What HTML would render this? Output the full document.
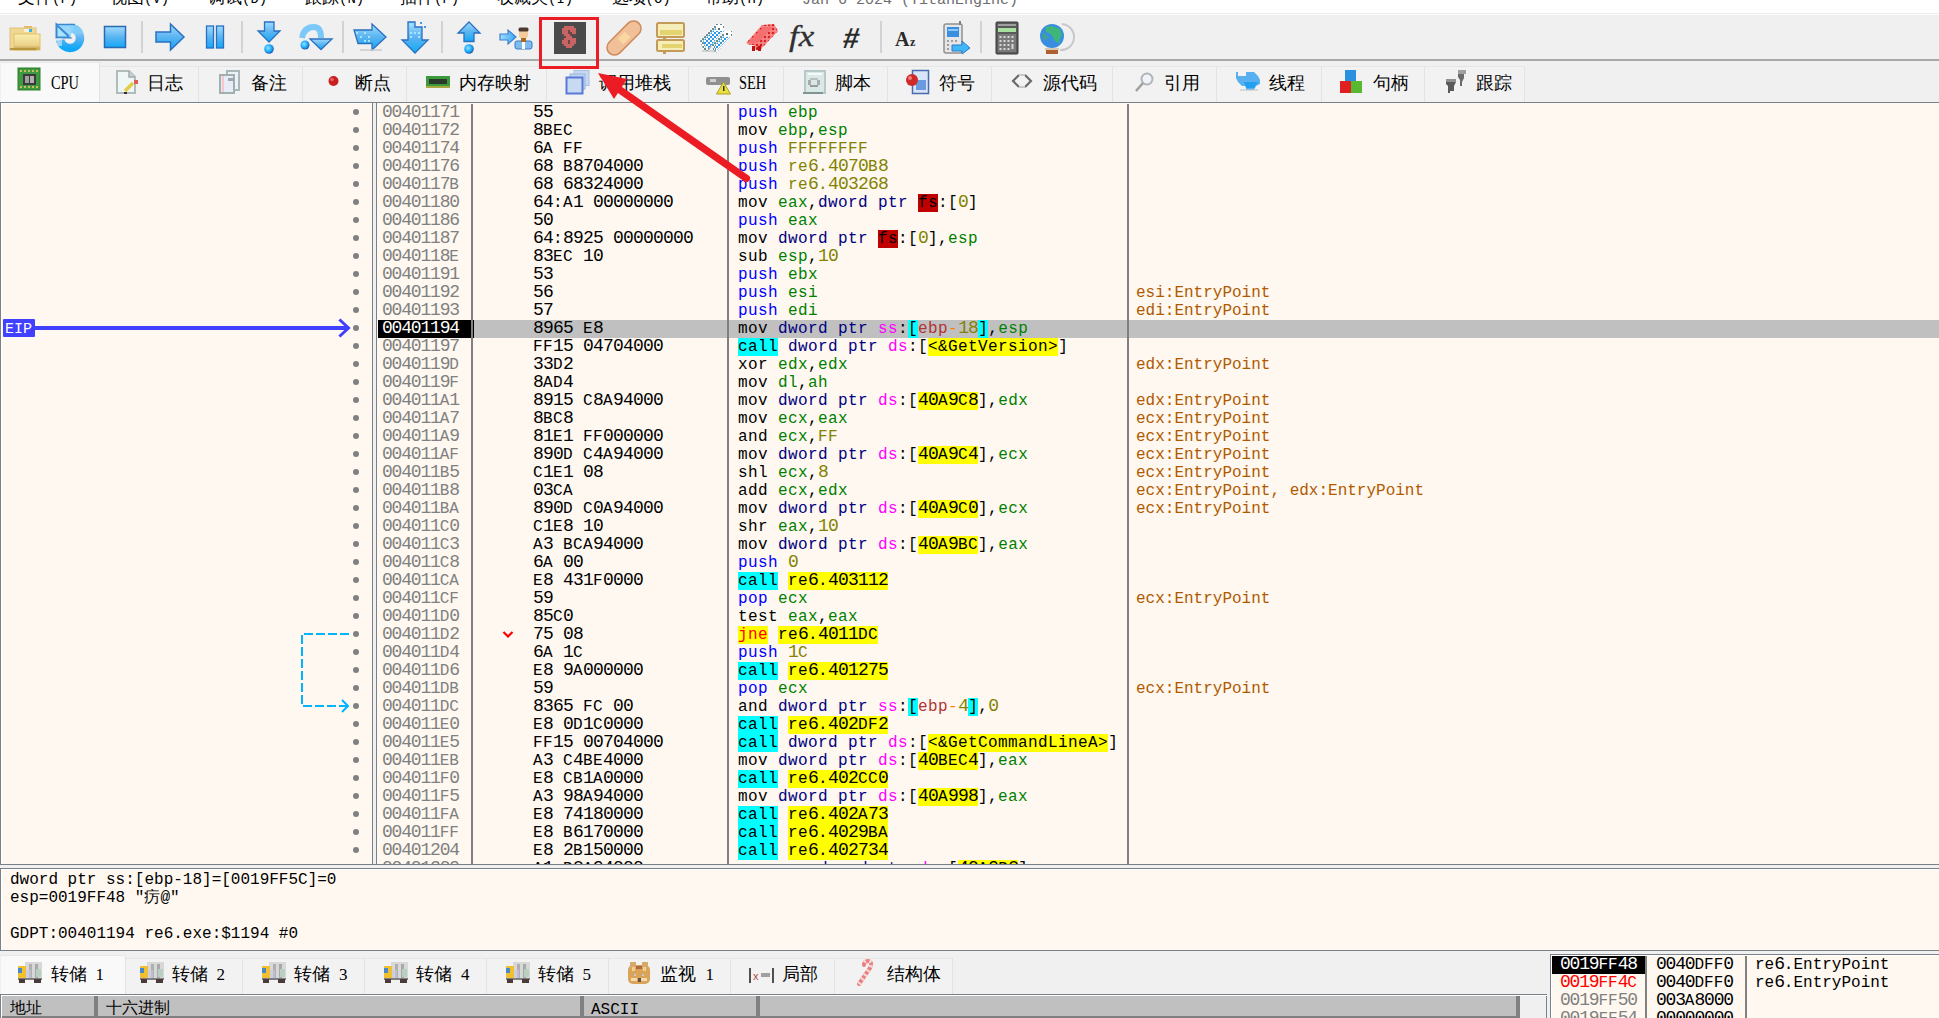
<!DOCTYPE html>
<html><head><meta charset="utf-8"><style>
html,body{margin:0;padding:0;}
body{width:1939px;height:1018px;position:relative;overflow:hidden;background:#f0f0f0;font-family:"Liberation Sans",sans-serif;}
</style></head><body>
<div style="position:absolute;left:0px;top:0px;width:1939px;height:13px;background:#fff"></div><div style="position:absolute;left:0px;top:13px;width:1939px;height:1px;background:#ececec"></div><div style="position:absolute;left:0px;top:14px;width:1939px;height:1px;background:#fff"></div><div style="position:absolute;left:18px;top:-12px;line-height:20px;white-space:pre;font-family:'Liberation Sans',sans-serif;font-size:17px;color:#000;">文件<span style="font-family:'Liberation Mono',monospace;font-size:14px">(F)</span></div><div style="position:absolute;left:110px;top:-12px;line-height:20px;white-space:pre;font-family:'Liberation Sans',sans-serif;font-size:17px;color:#000;">视图<span style="font-family:'Liberation Mono',monospace;font-size:14px">(V)</span></div><div style="position:absolute;left:208px;top:-12px;line-height:20px;white-space:pre;font-family:'Liberation Sans',sans-serif;font-size:17px;color:#000;">调试<span style="font-family:'Liberation Mono',monospace;font-size:14px">(D)</span></div><div style="position:absolute;left:305px;top:-12px;line-height:20px;white-space:pre;font-family:'Liberation Sans',sans-serif;font-size:17px;color:#000;">跟踪<span style="font-family:'Liberation Mono',monospace;font-size:14px">(N)</span></div><div style="position:absolute;left:400px;top:-12px;line-height:20px;white-space:pre;font-family:'Liberation Sans',sans-serif;font-size:17px;color:#000;">插件<span style="font-family:'Liberation Mono',monospace;font-size:14px">(P)</span></div><div style="position:absolute;left:497px;top:-12px;line-height:20px;white-space:pre;font-family:'Liberation Sans',sans-serif;font-size:17px;color:#000;">收藏夹<span style="font-family:'Liberation Mono',monospace;font-size:14px">(I)</span></div><div style="position:absolute;left:611.5px;top:-12px;line-height:20px;white-space:pre;font-family:'Liberation Sans',sans-serif;font-size:17px;color:#000;">选项<span style="font-family:'Liberation Mono',monospace;font-size:14px">(O)</span></div><div style="position:absolute;left:705px;top:-12px;line-height:20px;white-space:pre;font-family:'Liberation Sans',sans-serif;font-size:17px;color:#000;">帮助<span style="font-family:'Liberation Mono',monospace;font-size:14px">(H)</span></div><div style="position:absolute;left:802px;top:-9.5px;line-height:20px;white-space:pre;font-family:'Liberation Mono',monospace;font-size:16px;font-size:15px;color:#6d6d6d;">Jan 6 2024 (TitanEngine)</div><div style="position:absolute;left:0px;top:15px;width:1939px;height:44px;background:#f0f0f0"></div><div style="position:absolute;left:0px;top:59px;width:1939px;height:2px;background:#a9a9a9"></div><div style="position:absolute;left:141px;top:21px;width:2px;height:32px;background:#d2d2d2"></div><div style="position:absolute;left:241px;top:21px;width:2px;height:32px;background:#d2d2d2"></div><div style="position:absolute;left:342px;top:21px;width:2px;height:32px;background:#d2d2d2"></div><div style="position:absolute;left:441px;top:21px;width:2px;height:32px;background:#d2d2d2"></div><div style="position:absolute;left:880px;top:21px;width:2px;height:32px;background:#d2d2d2"></div><div style="position:absolute;left:980px;top:21px;width:2px;height:32px;background:#d2d2d2"></div><svg style="position:absolute;left:0;top:0" width="1939" height="62"><defs>
<linearGradient id="bl" x1="0" y1="0" x2="0" y2="1"><stop offset="0" stop-color="#9fdcff"/><stop offset="0.5" stop-color="#5cb4f0"/><stop offset="1" stop-color="#12a8f8"/></linearGradient>
<linearGradient id="blh" x1="0" y1="0" x2="1" y2="0"><stop offset="0" stop-color="#9fdcff"/><stop offset="1" stop-color="#3aa6f0"/></linearGradient>
<linearGradient id="fold" x1="0" y1="0" x2="0" y2="1"><stop offset="0" stop-color="#fbeeb0"/><stop offset="0.7" stop-color="#ecd38a"/><stop offset="1" stop-color="#b8963e"/></linearGradient>
<radialGradient id="dot" cx="0.4" cy="0.4" r="0.6"><stop offset="0" stop-color="#9fe0ff"/><stop offset="0.6" stop-color="#18b0ff"/><stop offset="1" stop-color="#2060b0"/></radialGradient>
</defs>
<!-- folder -->
<rect x="24" y="26" width="8" height="3" fill="#e8b860"/>
<rect x="10" y="28" width="26" height="22" fill="#f0d890" stroke="#dcc080" stroke-width="1"/>
<rect x="24" y="29" width="8" height="3" fill="#f8f0e0"/><rect x="29" y="29" width="3" height="3" fill="#40b0e0"/>
<rect x="14" y="34" width="26" height="16" fill="url(#fold)" stroke="#e0c070" stroke-width="1"/>
<rect x="10" y="48" width="26" height="2" fill="#b8963e"/>
<!-- restart -->
<path d="M60.2 40 A10 10 0 1 0 70 28" fill="none" stroke="url(#bl)" stroke-width="8.5"/>
<path d="M70 28 A10 10 0 0 1 79 33" fill="none" stroke="#80ccf8" stroke-width="8.5"/>
<polygon points="56.5,24.5 56.5,37.5 70,37.5" fill="#a8e4ff" stroke="#3a88d0" stroke-width="2"/>
<polygon points="56,24 75,24 70,37.5" fill="#8cd4fc" opacity="0.9"/>
<line x1="56" y1="24.5" x2="75" y2="24.5" stroke="#3a88d0" stroke-width="1.5"/>
<line x1="58" y1="26" x2="69" y2="36" stroke="#3a88d0" stroke-width="1.5"/>
<rect x="57" y="38" width="5" height="8" fill="#c8e4f8" opacity="0.7"/>
<!-- stop -->
<rect x="104.5" y="26.5" width="21" height="21" fill="url(#bl)" stroke="#2a6ab0" stroke-width="1.5"/>
<!-- run -->
<polygon points="156,32 170.5,32 170.5,24 184,37 170.5,50 170.5,42 156,42" fill="url(#bl)" stroke="#2a70c0" stroke-width="1.5" stroke-linejoin="miter"/>
<!-- pause -->
<rect x="206.5" y="26" width="7" height="22" fill="url(#bl)" stroke="#2a70c0" stroke-width="1.3"/>
<rect x="216.5" y="26" width="7" height="22" fill="url(#bl)" stroke="#2a70c0" stroke-width="1.3"/>
<!-- step into -->
<polygon points="264.5,22 274,22 274,31 280,31 269,42 258,31 264.5,31" fill="url(#bl)" stroke="#2a70c0" stroke-width="1.3"/>
<circle cx="269" cy="49" r="4.8" fill="url(#dot)"/>
<!-- step over -->
<path d="M302 38 Q304 27 314 27 Q321 27 321 38" fill="none" stroke="#7cc8f8" stroke-width="6"/>
<polygon points="310,39 332,39 321,49.5" fill="url(#bl)" stroke="#2a70c0" stroke-width="1.3"/>
<circle cx="305" cy="45" r="4.5" fill="url(#dot)"/>
<!-- trace into (dotted) -->
<polygon points="354,30 372,30 372,24 386,37 372,50 372,43.5 358,43.5" fill="url(#bl)" stroke="#2a70c0" stroke-width="1.3"/>
<g fill="#a8e4ff"><rect x="356" y="32" width="2" height="2"/><rect x="364" y="32" width="2" height="2"/><rect x="360" y="36" width="2" height="2"/><rect x="368" y="36" width="2" height="2"/><rect x="364" y="40" width="2" height="2"/><rect x="368" y="40" width="2" height="2"/></g>
<rect x="360" y="49" width="22" height="2" fill="#c8c8c8" opacity="0.7"/>
<!-- trace over (dotted) -->
<polygon points="408,22 415,22 415,27 422,27 422,40 428,40 415,53 402,40 408,40" fill="url(#bl)" stroke="#2a70c0" stroke-width="1.3"/>
<g fill="#a8e4ff"><rect x="410" y="24" width="2" height="2"/><rect x="410" y="32" width="2" height="2"/><rect x="414" y="32" width="2" height="2"/><rect x="418" y="32" width="2" height="2"/><rect x="410" y="36" width="2" height="2"/><rect x="418" y="36" width="2" height="2"/></g>
<rect x="420" y="22" width="2" height="2" fill="#3a9af0"/><rect x="424" y="26" width="2" height="2" fill="#3a9af0"/>
<!-- exec till return -->
<polygon points="469,22 480,33 474,33 474,41.5 464,41.5 464,33 458,33" fill="url(#bl)" stroke="#2a70c0" stroke-width="1.3"/>
<circle cx="469" cy="49" r="4.8" fill="url(#dot)"/>
<!-- run to user code -->
<polygon points="500,34 508,34 508,30 516,37 508,44 508,40 500,40" fill="url(#blh)" stroke="#3a80d0" stroke-width="1.2"/>
<rect x="515" y="41" width="17" height="8" rx="2" fill="#7cbcf0" stroke="#3a78c8" stroke-width="1"/>
<rect x="522" y="42" width="3" height="7" fill="#fff"/>
<rect x="519" y="28" width="9" height="10" rx="2" fill="#f4cc9c"/>
<rect x="518.5" y="27.5" width="10" height="4" rx="1.5" fill="#503a30"/>
<rect x="521" y="38" width="5" height="4" fill="#a86a20"/>
<!-- S icon -->
<rect x="554" y="22" width="32" height="32" fill="#4a4a4a"/>
<rect x="564" y="26" width="10" height="2" fill="#c86464"/><rect x="562" y="28" width="14" height="2" fill="#c86464"/><rect x="562" y="30" width="14" height="2" fill="#c86464"/><rect x="562" y="32" width="14" height="2" fill="#c86464"/><rect x="564" y="34" width="6" height="2" fill="#c86464"/><rect x="566" y="36" width="6" height="2" fill="#c86464"/><rect x="564" y="38" width="12" height="2" fill="#c86464"/><rect x="562" y="40" width="14" height="2" fill="#c86464"/><rect x="562" y="42" width="14" height="2" fill="#c86464"/><rect x="564" y="44" width="10" height="2" fill="#c86464"/><rect x="566" y="46" width="6" height="2" fill="#c86464"/><rect x="568" y="30" width="2" height="2" fill="#6a4848"/><rect x="568" y="32" width="2" height="2" fill="#6a4848"/><rect x="570" y="32" width="2" height="2" fill="#6a4848"/><rect x="570" y="34" width="2" height="2" fill="#6a4848"/><rect x="562" y="34" width="2" height="2" fill="#6a4848"/><rect x="564" y="36" width="2" height="2" fill="#6a4848"/><rect x="568" y="40" width="2" height="2" fill="#6a4848"/><rect x="568" y="42" width="2" height="2" fill="#6a4848"/><rect x="562" y="44" width="2" height="2" fill="#6a4848"/><rect x="574" y="34" width="2" height="2" fill="#6a4848"/><rect x="562" y="38" width="2" height="2" fill="#6a4848"/>
<!-- patch -->
<g transform="translate(624 38) rotate(-45)">
<rect x="-21" y="-7.5" width="42" height="15" rx="7.5" fill="#f2c098" stroke="#d08a5a" stroke-width="1.5"/>
<rect x="-5" y="-4" width="10" height="8" fill="#f8d8a0"/>
</g>
<!-- comments -->
<rect x="657" y="23" width="27" height="14" rx="1.5" fill="#f6eeb8" stroke="#c49a58" stroke-width="2"/>
<rect x="660" y="30" width="22" height="5" fill="#e4d470"/>
<rect x="657" y="40" width="27" height="11" rx="1.5" fill="#f6eeb8" stroke="#c49a58" stroke-width="2"/>
<rect x="662" y="44" width="20" height="4" fill="#e4d470"/>
<rect x="663" y="37" width="3" height="3" fill="#c49a58"/><rect x="663" y="51" width="3" height="3" fill="#c49a58"/>
<!-- labels -->
<defs><pattern id="chk" width="4" height="4" patternUnits="userSpaceOnUse"><rect width="4" height="4" fill="#2a9ae8"/><rect width="2" height="2" fill="#ffffff"/><rect x="2" y="2" width="2" height="2" fill="#ffffff"/></pattern>
<pattern id="chk2" width="4" height="4" patternUnits="userSpaceOnUse"><rect width="4" height="4" fill="#ffffff"/><rect width="2" height="2" fill="#5a8080"/><rect x="2" y="2" width="2" height="2" fill="#5a8080"/></pattern>
<pattern id="rchk" width="4" height="4" patternUnits="userSpaceOnUse"><rect width="4" height="4" fill="#f47a7a"/><rect width="2" height="2" fill="#e02020"/><rect x="2" y="2" width="2" height="2" fill="#f88888"/></pattern></defs>
<polygon points="700,41 716,24 724,24 724,29 708,51 704,51" fill="url(#chk2)" opacity="0.9"/>
<polygon points="703,41 717,27 723,27 723,31 709,48 706,48" fill="url(#chk)"/>
<polygon points="712,45 724,31 732,31 732,36 716,53 714,53" fill="url(#chk2)" opacity="0.9"/>
<polygon points="715,45 726,34 730,34 730,37 717,50 715,50" fill="url(#chk)"/>
<rect x="716" y="25" width="7" height="6" fill="#fff"/><rect x="718" y="28" width="2" height="2" fill="#507070"/>
<rect x="724" y="31" width="7" height="6" fill="#fff"/><rect x="726" y="33" width="2" height="2" fill="#507070"/>
<rect x="702" y="50" width="14" height="2" fill="#c0c0c0" opacity="0.6"/>
<!-- bookmarks -->
<polygon points="746,43 762,25 774,24 778,31 760,50 756,50 754,45 750,45" fill="url(#rchk)"/>
<polygon points="748,42 763,27 772,27 761,40 753,44" fill="#f47070"/>
<polygon points="756,48 760,50 762,44" fill="#c01010"/>
<rect x="752" y="46" width="3" height="5" fill="#c01010"/><rect x="758" y="46" width="3" height="5" fill="#c01010"/>
<!-- fx -->
<text x="0" y="0" transform="translate(789 46) scale(1.2 1)" font-family="Liberation Serif" font-style="italic" font-size="29" fill="#303030" stroke="#303030" stroke-width="0.3">fx</text>
<!-- # -->
<text x="0" y="0" transform="translate(842 48) skewX(-8)" font-family="Liberation Sans" font-weight="bold" font-size="29" fill="#2a2a2a">#</text>
<!-- A2 -->
<text x="895" y="46" font-family="Liberation Serif" font-weight="bold" font-size="20" fill="#2a2a2a">A</text>
<text x="910" y="46" font-family="Liberation Serif" font-weight="bold" font-size="12" fill="#2a2a2a">z</text>
<!-- phone -->
<rect x="944" y="24" width="18" height="29" rx="2" fill="#e6e6e6" stroke="#909090" stroke-width="1.5"/>
<rect x="959" y="21" width="2" height="4" fill="#808080"/>
<rect x="947" y="27" width="12" height="10" fill="#3a8ee0"/>
<rect x="948" y="29" width="10" height="2" fill="#8cc8f8"/>
<g fill="#a0a0a0"><rect x="947" y="40" width="2" height="2"/><rect x="951" y="40" width="2" height="2"/><rect x="955" y="40" width="2" height="2"/><rect x="947" y="44" width="2" height="2"/><rect x="947" y="48" width="2" height="2"/></g>
<polygon points="952,45 962,45 962,41 970,48 962,54 962,51 952,51" fill="#40b8f8" stroke="#2a78c8" stroke-width="1"/>
<!-- calculator -->
<rect x="996" y="22" width="22" height="32" rx="1" fill="#5a5a5a" stroke="#3a3a3a" stroke-width="1"/>
<rect x="998" y="24" width="18" height="2" fill="#a0a0a0"/>
<rect x="998" y="28" width="18" height="4" fill="#a8e0a0"/>
<rect x="998" y="34" width="18" height="18" fill="#7a7a7a"/>
<g fill="#d8d8d8"><rect x="999.5" y="36" width="2" height="2"/><rect x="1003.5" y="36" width="2" height="2"/><rect x="1007.5" y="36" width="2" height="2"/><rect x="1011.5" y="36" width="2" height="2"/>
<rect x="999.5" y="40" width="2" height="2"/><rect x="1003.5" y="40" width="2" height="2"/><rect x="1007.5" y="40" width="2" height="2"/><rect x="1011.5" y="40" width="2" height="2"/>
<rect x="999.5" y="44" width="2" height="2"/><rect x="1003.5" y="44" width="2" height="2"/><rect x="1007.5" y="44" width="2" height="2"/><rect x="1011.5" y="44" width="2" height="5"/>
<rect x="999.5" y="48" width="2" height="2"/><rect x="1003.5" y="48" width="2" height="2"/><rect x="1007.5" y="48" width="2" height="2"/></g>
<!-- globe -->
<path d="M1062 24 A13 13 0 0 1 1060 50" fill="none" stroke="#c8c8c8" stroke-width="2"/>
<circle cx="1052" cy="36" r="12" fill="#3a8ee0"/>
<path d="M1046 27 Q1052 25 1060 29 L1062 35 Q1058 40 1060 44 L1054 40 Q1052 33 1046 32 Z" fill="#40c060" opacity="0.8"/>
<path d="M1042 34 Q1046 33 1048 38 L1044 40 Z" fill="#40b060" opacity="0.7"/>
<rect x="1046" y="50" width="12" height="4" fill="#b06030"/>
<rect x="1045" y="48" width="14" height="2" fill="#d8c8b0"/>
</svg><div style="position:absolute;left:0px;top:61px;width:1939px;height:41px;background:#f0f0f0"></div><div style="position:absolute;left:1px;top:62px;width:99px;height:40px;background:#f9f9f9;border-right:1px solid #e3e3e3;border-top:1px solid #e8e8e8;box-sizing:border-box"></div><div style="position:absolute;left:100px;top:66px;width:99px;height:36px;background:#f2f2f2;border-top:1px solid #e6e6e6;border-right:1px solid #e3e3e3;box-sizing:border-box"></div><div style="position:absolute;left:199px;top:66px;width:104px;height:36px;background:#f2f2f2;border-top:1px solid #e6e6e6;border-right:1px solid #e3e3e3;box-sizing:border-box"></div><div style="position:absolute;left:303px;top:66px;width:104px;height:36px;background:#f2f2f2;border-top:1px solid #e6e6e6;border-right:1px solid #e3e3e3;box-sizing:border-box"></div><div style="position:absolute;left:407px;top:66px;width:140px;height:36px;background:#f2f2f2;border-top:1px solid #e6e6e6;border-right:1px solid #e3e3e3;box-sizing:border-box"></div><div style="position:absolute;left:547px;top:66px;width:142px;height:36px;background:#f2f2f2;border-top:1px solid #e6e6e6;border-right:1px solid #e3e3e3;box-sizing:border-box"></div><div style="position:absolute;left:689px;top:66px;width:95px;height:36px;background:#f2f2f2;border-top:1px solid #e6e6e6;border-right:1px solid #e3e3e3;box-sizing:border-box"></div><div style="position:absolute;left:784px;top:66px;width:104px;height:36px;background:#f2f2f2;border-top:1px solid #e6e6e6;border-right:1px solid #e3e3e3;box-sizing:border-box"></div><div style="position:absolute;left:888px;top:66px;width:104px;height:36px;background:#f2f2f2;border-top:1px solid #e6e6e6;border-right:1px solid #e3e3e3;box-sizing:border-box"></div><div style="position:absolute;left:992px;top:66px;width:121px;height:36px;background:#f2f2f2;border-top:1px solid #e6e6e6;border-right:1px solid #e3e3e3;box-sizing:border-box"></div><div style="position:absolute;left:1113px;top:66px;width:104px;height:36px;background:#f2f2f2;border-top:1px solid #e6e6e6;border-right:1px solid #e3e3e3;box-sizing:border-box"></div><div style="position:absolute;left:1217px;top:66px;width:105px;height:36px;background:#f2f2f2;border-top:1px solid #e6e6e6;border-right:1px solid #e3e3e3;box-sizing:border-box"></div><div style="position:absolute;left:1322px;top:66px;width:103px;height:36px;background:#f2f2f2;border-top:1px solid #e6e6e6;border-right:1px solid #e3e3e3;box-sizing:border-box"></div><div style="position:absolute;left:1425px;top:66px;width:100px;height:36px;background:#f2f2f2;border-top:1px solid #e6e6e6;border-right:1px solid #e3e3e3;box-sizing:border-box"></div><div style="position:absolute;left:50.5px;top:70.5px;line-height:24px;white-space:pre;font-family:'Liberation Serif',serif;font-size:18px;color:#000;transform:scaleX(0.8);transform-origin:0 0;">CPU</div><div style="position:absolute;left:146.5px;top:70.5px;line-height:24px;white-space:pre;font-family:'Liberation Sans',sans-serif;font-size:18px;color:#000;">日志</div><div style="position:absolute;left:251px;top:70.5px;line-height:24px;white-space:pre;font-family:'Liberation Sans',sans-serif;font-size:18px;color:#000;">备注</div><div style="position:absolute;left:355px;top:70.5px;line-height:24px;white-space:pre;font-family:'Liberation Sans',sans-serif;font-size:18px;color:#000;">断点</div><div style="position:absolute;left:458.5px;top:70.5px;line-height:24px;white-space:pre;font-family:'Liberation Sans',sans-serif;font-size:18px;color:#000;">内存映射</div><div style="position:absolute;left:599px;top:70.5px;line-height:24px;white-space:pre;font-family:'Liberation Sans',sans-serif;font-size:18px;color:#000;">调用堆栈</div><div style="position:absolute;left:738.5px;top:70.5px;line-height:24px;white-space:pre;font-family:'Liberation Serif',serif;font-size:18px;color:#000;transform:scaleX(0.8);transform-origin:0 0;">SEH</div><div style="position:absolute;left:834.5px;top:70.5px;line-height:24px;white-space:pre;font-family:'Liberation Sans',sans-serif;font-size:18px;color:#000;">脚本</div><div style="position:absolute;left:938.5px;top:70.5px;line-height:24px;white-space:pre;font-family:'Liberation Sans',sans-serif;font-size:18px;color:#000;">符号</div><div style="position:absolute;left:1042.5px;top:70.5px;line-height:24px;white-space:pre;font-family:'Liberation Sans',sans-serif;font-size:18px;color:#000;">源代码</div><div style="position:absolute;left:1164px;top:70.5px;line-height:24px;white-space:pre;font-family:'Liberation Sans',sans-serif;font-size:18px;color:#000;">引用</div><div style="position:absolute;left:1269px;top:70.5px;line-height:24px;white-space:pre;font-family:'Liberation Sans',sans-serif;font-size:18px;color:#000;">线程</div><div style="position:absolute;left:1373px;top:70.5px;line-height:24px;white-space:pre;font-family:'Liberation Sans',sans-serif;font-size:18px;color:#000;">句柄</div><div style="position:absolute;left:1476px;top:70.5px;line-height:24px;white-space:pre;font-family:'Liberation Sans',sans-serif;font-size:18px;color:#000;">跟踪</div><svg style="position:absolute;left:0;top:60" width="1939" height="42"><g transform="translate(0,-60)">
<!-- CPU -->
<rect x="18" y="68" width="22" height="22" fill="#3f9a3f" stroke="#2c7c2c" stroke-width="1"/>
<g fill="#c8c060"><rect x="20" y="70" width="2" height="2"/><rect x="24" y="70" width="2" height="2"/><rect x="28" y="70" width="2" height="2"/><rect x="32" y="70" width="2" height="2"/><rect x="36" y="70" width="2" height="2"/>
<rect x="20" y="86" width="2" height="2"/><rect x="24" y="86" width="2" height="2"/><rect x="28" y="86" width="2" height="2"/><rect x="32" y="86" width="2" height="2"/><rect x="36" y="86" width="2" height="2"/></g>
<rect x="23" y="74" width="13" height="11" fill="#3a3a3a"/>
<rect x="25" y="76" width="4" height="7" fill="#a0a0a0"/><rect x="30" y="76" width="4" height="7" fill="#b0b0b0"/>
<!-- log -->
<path d="M117 71 H129 L135 77 V93 H117 Z" fill="#eef6f6" stroke="#b0bcbc" stroke-width="2"/>
<path d="M129 71 V77 H135" fill="#c8d4d4" stroke="#a0acac" stroke-width="1.5"/>
<line x1="125" y1="91" x2="133" y2="83" stroke="#e4cc48" stroke-width="3.5"/>
<rect x="134" y="80" width="4" height="4" fill="#e05a5a"/>
<rect x="124" y="92" width="3" height="2" fill="#303030"/>
<!-- notes -->
<rect x="227" y="71" width="12" height="19" fill="#eef2f8" stroke="#a8b8b8" stroke-width="2"/>
<rect x="220" y="75" width="14" height="18" fill="#e8ecf8" stroke="#a0b0b0" stroke-width="2"/>
<rect x="222" y="76" width="2" height="16" fill="#f8c8c8"/>
<rect x="228" y="78" width="6" height="3" fill="#9aa8a8"/>
<!-- breakpoint -->
<circle cx="333.5" cy="81" r="5" fill="#c81e1e"/><circle cx="332" cy="79.5" r="1.8" fill="#e86060"/>
<!-- memory map -->
<rect x="426" y="76" width="24" height="12" fill="#3c9a3c"/>
<rect x="429" y="79" width="18" height="5" fill="#2a3a2a"/>
<rect x="426" y="86" width="24" height="2" fill="#a8a840"/>
<!-- call stack -->
<rect x="574" y="70.5" width="15" height="15" fill="#c8d8f0" stroke="#a8c0e0" stroke-width="1"/>
<rect x="570" y="74" width="15" height="15" fill="#c0d4f0" stroke="#98b4e0" stroke-width="1"/>
<rect x="566.5" y="77.5" width="16" height="16" fill="#c8daf2" stroke="#5a78d8" stroke-width="2"/>
<!-- SEH -->
<rect x="706" y="77" width="24" height="8" rx="2" fill="#909090"/>
<rect x="710" y="79" width="6" height="3" fill="#d0d0d0"/>
<polygon points="723.5,82 730.5,94 716.5,94" fill="#e8e040" stroke="#b0a020" stroke-width="1"/>
<rect x="723" y="86" width="1.5" height="5" fill="#303030"/>
<!-- script -->
<rect x="805" y="71" width="20" height="22" fill="#dbe8e8" stroke="#b8c8c8" stroke-width="2"/>
<rect x="808" y="73" width="14" height="2" fill="#f4fafa"/>
<rect x="803" y="92" width="20" height="2" fill="#809494"/>
<rect x="808" y="80" width="3" height="5" fill="#a8acac"/><rect x="817" y="80" width="3" height="5" fill="#a8acac"/>
<rect x="810" y="78" width="8" height="2" fill="#b8c0c0"/><rect x="810" y="85" width="8" height="2" fill="#989c9c"/>
<!-- symbols -->
<rect x="912.5" y="70.5" width="16" height="23" fill="#d8e4f8" stroke="#4a6ab0" stroke-width="1.5"/>
<rect x="916" y="80" width="10" height="10" fill="#6a9ae0"/>
<circle cx="912" cy="80" r="6" fill="#d02828"/><circle cx="910" cy="78" r="2" fill="#f08080"/>
<!-- source -->
<polyline points="1019,75 1013,81 1019,87" fill="none" stroke="#6a6a6a" stroke-width="2.2"/>
<polyline points="1025,75 1031,81 1025,87" fill="none" stroke="#6a6a6a" stroke-width="2.2"/>
<line x1="1019" y1="75" x2="1025" y2="75" stroke="#c8c8c8" stroke-width="2"/>
<line x1="1019" y1="87" x2="1025" y2="87" stroke="#c8c8c8" stroke-width="2"/>
<!-- references -->
<circle cx="1147" cy="79" r="5.5" fill="#f0f4f8" stroke="#b0b4b8" stroke-width="2"/>
<line x1="1143" y1="83" x2="1136" y2="91" stroke="#a0a0a0" stroke-width="2.5"/>
<!-- threads (bird) -->
<path d="M1236 72 L1238 72 L1238 76 L1246 76 L1246 72 L1254 72 L1256 74 L1258 76 L1260 80 L1260 84 L1256 86 L1254 90 L1246 90 L1246 86 L1242 86 L1238 82 L1236 78 Z" fill="#58b0f0"/>
<path d="M1244 82 L1258 82 L1254 88 L1246 88 Z" fill="#20a0f0"/>
<rect x="1240" y="89" width="18" height="2" fill="#c8c8c8" opacity="0.6"/>
<!-- handles -->
<rect x="1345" y="70" width="11" height="12" fill="#2a90e0"/>
<rect x="1340" y="81" width="11" height="12" fill="#e02020"/>
<rect x="1351" y="81" width="11" height="12" fill="#58b830"/>
<!-- trace -->
<path d="M1448 79 H1456 V82 L1454 86 V91 H1450 V93 H1448 V86 L1446 84 V81 Z" fill="#5a5a5a"/>
<path d="M1458 70 H1464 V78 L1462 82 V86 H1460 V80 L1458 77 Z" fill="#6a6a6a"/>
<rect x="1446" y="79" width="10" height="3" fill="#909090"/>
<rect x="1458" y="70" width="8" height="4" fill="#a0a0a0"/>
</g>
<rect x="23" y="74" width="13" height="11" fill="#3a3a3a"/>
<rect x="25" y="76" width="4" height="7" fill="#a0a0a0"/><rect x="30" y="76" width="4" height="7" fill="#b0b0b0"/>
<!-- log -->
<path d="M117 71 H129 L135 77 V93 H117 Z" fill="#eef6f6" stroke="#b0bcbc" stroke-width="2"/>
<path d="M129 71 V77 H135" fill="#c8d4d4" stroke="#a0acac" stroke-width="1.5"/>
<line x1="125" y1="91" x2="133" y2="83" stroke="#e4cc48" stroke-width="3.5"/>
<rect x="134" y="80" width="4" height="4" fill="#e05a5a"/>
<rect x="124" y="92" width="3" height="2" fill="#303030"/>
<!-- notes -->
<rect x="227" y="71" width="12" height="19" fill="#eef2f8" stroke="#a8b8b8" stroke-width="2"/>
<rect x="220" y="75" width="14" height="18" fill="#e8ecf8" stroke="#a0b0b0" stroke-width="2"/>
<rect x="222" y="76" width="2" height="16" fill="#f8c8c8"/>
<rect x="228" y="78" width="6" height="3" fill="#9aa8a8"/>
<!-- breakpoint -->
<circle cx="333.5" cy="81" r="5" fill="#c81e1e"/><circle cx="332" cy="79.5" r="1.8" fill="#e86060"/>
<!-- memory map -->
<rect x="426" y="76" width="24" height="12" fill="#3c9a3c"/>
<rect x="429" y="79" width="18" height="5" fill="#2a3a2a"/>
<rect x="426" y="86" width="24" height="2" fill="#a8a840"/>
<!-- call stack -->
<rect x="574" y="70.5" width="15" height="15" fill="#c8d8f0" stroke="#a8c0e0" stroke-width="1"/>
<rect x="570" y="74" width="15" height="15" fill="#c0d4f0" stroke="#98b4e0" stroke-width="1"/>
<rect x="566.5" y="77.5" width="16" height="16" fill="#c8daf2" stroke="#5a78d8" stroke-width="2"/>
<!-- SEH -->
<rect x="706" y="77" width="24" height="8" rx="2" fill="#909090"/>
<rect x="710" y="79" width="6" height="3" fill="#d0d0d0"/>
<polygon points="723.5,82 730.5,94 716.5,94" fill="#e8e040" stroke="#b0a020" stroke-width="1"/>
<rect x="723" y="86" width="1.5" height="5" fill="#303030"/>
<!-- script -->
<rect x="803.5" y="70.5" width="21" height="23" fill="#dfe6e2" stroke="#a8b4ae" stroke-width="1.2"/>
<rect x="808" y="80" width="12" height="5" fill="#a8b0ac"/>
<!-- symbols -->
<rect x="912.5" y="70.5" width="16" height="23" fill="#d8e4f8" stroke="#4a6ab0" stroke-width="1.5"/>
<rect x="916" y="80" width="10" height="10" fill="#6a9ae0"/>
<circle cx="912" cy="80" r="6" fill="#d02828"/><circle cx="910" cy="78" r="2" fill="#f08080"/>
<!-- source -->
<polyline points="1018,79 1013,83.5 1018,88" fill="none" stroke="#808080" stroke-width="2.2"/>
<polyline points="1026,79 1031,83.5 1026,88" fill="none" stroke="#808080" stroke-width="2.2"/>
<!-- references -->
<circle cx="1147" cy="79" r="5.5" fill="#f0f4f8" stroke="#b0b4b8" stroke-width="2"/>
<line x1="1143" y1="83" x2="1136" y2="91" stroke="#a0a0a0" stroke-width="2.5"/>
<!-- threads (bird) -->
<path d="M1236 72 L1238 72 L1238 76 L1246 76 L1246 72 L1254 72 L1256 74 L1258 76 L1260 80 L1260 84 L1256 86 L1254 90 L1246 90 L1246 86 L1242 86 L1238 82 L1236 78 Z" fill="#58b0f0"/>
<path d="M1244 82 L1258 82 L1254 88 L1246 88 Z" fill="#20a0f0"/>
<rect x="1240" y="89" width="18" height="2" fill="#c8c8c8" opacity="0.6"/>
<!-- handles -->
<rect x="1345" y="70" width="11" height="12" fill="#2a90e0"/>
<rect x="1340" y="81" width="11" height="12" fill="#e02020"/>
<rect x="1351" y="81" width="11" height="12" fill="#58b830"/>
<!-- trace -->
<path d="M1448 84 q2 -4 5 -2 q1 3 -2 6 l-1 6 h-2 z" fill="#707070"/>
<path d="M1458 72 q3 -2 5 1 l0 8 q-2 2 -4 0 z" fill="#808080"/>
<rect x="1452" y="78" width="4" height="3" fill="#909090"/>
</g>
</svg><div style="position:absolute;left:0px;top:102px;width:1939px;height:1px;background:#7b8189"></div><div style="position:absolute;left:0px;top:103px;width:373px;height:762px;background:#fff8f0"></div><div style="position:absolute;left:0px;top:103px;width:1px;height:762px;background:#7b8189"></div><div style="position:absolute;left:372px;top:103px;width:1px;height:762px;background:#7b8189"></div><div style="position:absolute;left:373px;top:103px;width:3px;height:762px;background:#f0f0f0"></div><div style="position:absolute;left:1px;top:103px;width:371px;height:1px;background:#fff"></div><div style="position:absolute;left:1px;top:103px;width:1px;height:761px;background:#fff"></div><div style="position:absolute;left:377px;top:103px;width:1562px;height:1px;background:#fff"></div><div style="position:absolute;left:377px;top:103px;width:1px;height:761px;background:#fff"></div><div style="position:absolute;left:376px;top:103px;width:1563px;height:762px;background:#fff8f0"></div><div style="position:absolute;left:376px;top:103px;width:1px;height:762px;background:#7b8189"></div><div style="position:absolute;left:0px;top:864px;width:1939px;height:1px;background:#7b8189"></div><div style="position:absolute;left:0px;top:865px;width:1939px;height:3px;background:#f0f0f0"></div><div style="position:absolute;left:474px;top:320px;width:1465px;height:18px;background:#c0c0c0"></div><div style="position:absolute;left:378px;top:320px;width:96px;height:18px;background:#000"></div><div style="position:absolute;left:471px;top:104px;width:2px;height:760px;background:#808080"></div><div style="position:absolute;left:727px;top:104px;width:2px;height:760px;background:#808080"></div><div style="position:absolute;left:1127px;top:104px;width:2px;height:760px;background:#808080"></div><div style="position:absolute;left:0;top:0;width:1939px;height:864px;overflow:hidden"><div style="position:absolute;left:382px;top:104px;line-height:18px;white-space:pre;font-family:'Liberation Mono',monospace;font-size:16px;color:#808080;"><span style="font-size:18px;letter-spacing:-1.182px;line-height:0;position:relative;top:-0.3px">00401171</span></div><div style="position:absolute;left:533px;top:104px;line-height:18px;white-space:pre;font-family:'Liberation Mono',monospace;font-size:16px;letter-spacing:0.4px;color:#000;"><span style="font-size:18px;letter-spacing:-0.802px;line-height:0;position:relative;top:-0.3px">55</span></div><div style="position:absolute;left:738px;top:104px;line-height:18px;white-space:pre;font-family:'Liberation Mono',monospace;font-size:16px;letter-spacing:0.4px;color:#000;"><span style="color:#0000ff">push</span> <span style="color:#008000">ebp</span></div><div style="position:absolute;left:353px;top:109px;width:6px;height:6px;border-radius:50%;background:#808080"></div><div style="position:absolute;left:382px;top:122px;line-height:18px;white-space:pre;font-family:'Liberation Mono',monospace;font-size:16px;color:#808080;"><span style="font-size:18px;letter-spacing:-1.182px;line-height:0;position:relative;top:-0.3px">00401172</span></div><div style="position:absolute;left:533px;top:122px;line-height:18px;white-space:pre;font-family:'Liberation Mono',monospace;font-size:16px;letter-spacing:0.4px;color:#000;"><span style="font-size:18px;letter-spacing:-0.802px;line-height:0;position:relative;top:-0.3px">8</span>BEC</div><div style="position:absolute;left:738px;top:122px;line-height:18px;white-space:pre;font-family:'Liberation Mono',monospace;font-size:16px;letter-spacing:0.4px;color:#000;">mov <span style="color:#008000">ebp</span>,<span style="color:#008000">esp</span></div><div style="position:absolute;left:353px;top:127px;width:6px;height:6px;border-radius:50%;background:#808080"></div><div style="position:absolute;left:382px;top:140px;line-height:18px;white-space:pre;font-family:'Liberation Mono',monospace;font-size:16px;color:#808080;"><span style="font-size:18px;letter-spacing:-1.182px;line-height:0;position:relative;top:-0.3px">00401174</span></div><div style="position:absolute;left:533px;top:140px;line-height:18px;white-space:pre;font-family:'Liberation Mono',monospace;font-size:16px;letter-spacing:0.4px;color:#000;"><span style="font-size:18px;letter-spacing:-0.802px;line-height:0;position:relative;top:-0.3px">6</span>A FF</div><div style="position:absolute;left:738px;top:140px;line-height:18px;white-space:pre;font-family:'Liberation Mono',monospace;font-size:16px;letter-spacing:0.4px;color:#000;"><span style="color:#0000ff">push</span> <span style="color:#828200">FFFFFFFF</span></div><div style="position:absolute;left:353px;top:145px;width:6px;height:6px;border-radius:50%;background:#808080"></div><div style="position:absolute;left:382px;top:158px;line-height:18px;white-space:pre;font-family:'Liberation Mono',monospace;font-size:16px;color:#808080;"><span style="font-size:18px;letter-spacing:-1.182px;line-height:0;position:relative;top:-0.3px">00401176</span></div><div style="position:absolute;left:533px;top:158px;line-height:18px;white-space:pre;font-family:'Liberation Mono',monospace;font-size:16px;letter-spacing:0.4px;color:#000;"><span style="font-size:18px;letter-spacing:-0.802px;line-height:0;position:relative;top:-0.3px">68</span> B<span style="font-size:18px;letter-spacing:-0.802px;line-height:0;position:relative;top:-0.3px">8704000</span></div><div style="position:absolute;left:738px;top:158px;line-height:18px;white-space:pre;font-family:'Liberation Mono',monospace;font-size:16px;letter-spacing:0.4px;color:#000;"><span style="color:#0000ff">push</span> <span style="color:#828200">re<span style="font-size:18px;letter-spacing:-0.802px;line-height:0;position:relative;top:-0.3px">6</span>.<span style="font-size:18px;letter-spacing:-0.802px;line-height:0;position:relative;top:-0.3px">4070</span>B<span style="font-size:18px;letter-spacing:-0.802px;line-height:0;position:relative;top:-0.3px">8</span></span></div><div style="position:absolute;left:353px;top:163px;width:6px;height:6px;border-radius:50%;background:#808080"></div><div style="position:absolute;left:382px;top:176px;line-height:18px;white-space:pre;font-family:'Liberation Mono',monospace;font-size:16px;color:#808080;"><span style="font-size:18px;letter-spacing:-1.182px;line-height:0;position:relative;top:-0.3px">0040117</span>B</div><div style="position:absolute;left:533px;top:176px;line-height:18px;white-space:pre;font-family:'Liberation Mono',monospace;font-size:16px;letter-spacing:0.4px;color:#000;"><span style="font-size:18px;letter-spacing:-0.802px;line-height:0;position:relative;top:-0.3px">68</span> <span style="font-size:18px;letter-spacing:-0.802px;line-height:0;position:relative;top:-0.3px">68324000</span></div><div style="position:absolute;left:738px;top:176px;line-height:18px;white-space:pre;font-family:'Liberation Mono',monospace;font-size:16px;letter-spacing:0.4px;color:#000;"><span style="color:#0000ff">push</span> <span style="color:#828200">re<span style="font-size:18px;letter-spacing:-0.802px;line-height:0;position:relative;top:-0.3px">6</span>.<span style="font-size:18px;letter-spacing:-0.802px;line-height:0;position:relative;top:-0.3px">403268</span></span></div><div style="position:absolute;left:353px;top:181px;width:6px;height:6px;border-radius:50%;background:#808080"></div><div style="position:absolute;left:382px;top:194px;line-height:18px;white-space:pre;font-family:'Liberation Mono',monospace;font-size:16px;color:#808080;"><span style="font-size:18px;letter-spacing:-1.182px;line-height:0;position:relative;top:-0.3px">00401180</span></div><div style="position:absolute;left:533px;top:194px;line-height:18px;white-space:pre;font-family:'Liberation Mono',monospace;font-size:16px;letter-spacing:0.4px;color:#000;"><span style="font-size:18px;letter-spacing:-0.802px;line-height:0;position:relative;top:-0.3px">64</span>:A<span style="font-size:18px;letter-spacing:-0.802px;line-height:0;position:relative;top:-0.3px">1</span> <span style="font-size:18px;letter-spacing:-0.802px;line-height:0;position:relative;top:-0.3px">00000000</span></div><div style="position:absolute;left:738px;top:194px;line-height:18px;white-space:pre;font-family:'Liberation Mono',monospace;font-size:16px;letter-spacing:0.4px;color:#000;">mov <span style="color:#008000">eax</span>,<span style="color:#000080">dword ptr</span> <span style="background:#c00000;color:#000;display:inline-block;height:18px">fs</span>:[<span style="color:#828200"><span style="font-size:18px;letter-spacing:-0.802px;line-height:0;position:relative;top:-0.3px">0</span></span>]</div><div style="position:absolute;left:353px;top:199px;width:6px;height:6px;border-radius:50%;background:#808080"></div><div style="position:absolute;left:382px;top:212px;line-height:18px;white-space:pre;font-family:'Liberation Mono',monospace;font-size:16px;color:#808080;"><span style="font-size:18px;letter-spacing:-1.182px;line-height:0;position:relative;top:-0.3px">00401186</span></div><div style="position:absolute;left:533px;top:212px;line-height:18px;white-space:pre;font-family:'Liberation Mono',monospace;font-size:16px;letter-spacing:0.4px;color:#000;"><span style="font-size:18px;letter-spacing:-0.802px;line-height:0;position:relative;top:-0.3px">50</span></div><div style="position:absolute;left:738px;top:212px;line-height:18px;white-space:pre;font-family:'Liberation Mono',monospace;font-size:16px;letter-spacing:0.4px;color:#000;"><span style="color:#0000ff">push</span> <span style="color:#008000">eax</span></div><div style="position:absolute;left:353px;top:217px;width:6px;height:6px;border-radius:50%;background:#808080"></div><div style="position:absolute;left:382px;top:230px;line-height:18px;white-space:pre;font-family:'Liberation Mono',monospace;font-size:16px;color:#808080;"><span style="font-size:18px;letter-spacing:-1.182px;line-height:0;position:relative;top:-0.3px">00401187</span></div><div style="position:absolute;left:533px;top:230px;line-height:18px;white-space:pre;font-family:'Liberation Mono',monospace;font-size:16px;letter-spacing:0.4px;color:#000;"><span style="font-size:18px;letter-spacing:-0.802px;line-height:0;position:relative;top:-0.3px">64</span>:<span style="font-size:18px;letter-spacing:-0.802px;line-height:0;position:relative;top:-0.3px">8925</span> <span style="font-size:18px;letter-spacing:-0.802px;line-height:0;position:relative;top:-0.3px">00000000</span></div><div style="position:absolute;left:738px;top:230px;line-height:18px;white-space:pre;font-family:'Liberation Mono',monospace;font-size:16px;letter-spacing:0.4px;color:#000;">mov <span style="color:#000080">dword ptr</span> <span style="background:#c00000;color:#000;display:inline-block;height:18px">fs</span>:[<span style="color:#828200"><span style="font-size:18px;letter-spacing:-0.802px;line-height:0;position:relative;top:-0.3px">0</span></span>],<span style="color:#008000">esp</span></div><div style="position:absolute;left:353px;top:235px;width:6px;height:6px;border-radius:50%;background:#808080"></div><div style="position:absolute;left:382px;top:248px;line-height:18px;white-space:pre;font-family:'Liberation Mono',monospace;font-size:16px;color:#808080;"><span style="font-size:18px;letter-spacing:-1.182px;line-height:0;position:relative;top:-0.3px">0040118</span>E</div><div style="position:absolute;left:533px;top:248px;line-height:18px;white-space:pre;font-family:'Liberation Mono',monospace;font-size:16px;letter-spacing:0.4px;color:#000;"><span style="font-size:18px;letter-spacing:-0.802px;line-height:0;position:relative;top:-0.3px">83</span>EC <span style="font-size:18px;letter-spacing:-0.802px;line-height:0;position:relative;top:-0.3px">10</span></div><div style="position:absolute;left:738px;top:248px;line-height:18px;white-space:pre;font-family:'Liberation Mono',monospace;font-size:16px;letter-spacing:0.4px;color:#000;">sub <span style="color:#008000">esp</span>,<span style="color:#828200"><span style="font-size:18px;letter-spacing:-0.802px;line-height:0;position:relative;top:-0.3px">10</span></span></div><div style="position:absolute;left:353px;top:253px;width:6px;height:6px;border-radius:50%;background:#808080"></div><div style="position:absolute;left:382px;top:266px;line-height:18px;white-space:pre;font-family:'Liberation Mono',monospace;font-size:16px;color:#808080;"><span style="font-size:18px;letter-spacing:-1.182px;line-height:0;position:relative;top:-0.3px">00401191</span></div><div style="position:absolute;left:533px;top:266px;line-height:18px;white-space:pre;font-family:'Liberation Mono',monospace;font-size:16px;letter-spacing:0.4px;color:#000;"><span style="font-size:18px;letter-spacing:-0.802px;line-height:0;position:relative;top:-0.3px">53</span></div><div style="position:absolute;left:738px;top:266px;line-height:18px;white-space:pre;font-family:'Liberation Mono',monospace;font-size:16px;letter-spacing:0.4px;color:#000;"><span style="color:#0000ff">push</span> <span style="color:#008000">ebx</span></div><div style="position:absolute;left:353px;top:271px;width:6px;height:6px;border-radius:50%;background:#808080"></div><div style="position:absolute;left:382px;top:284px;line-height:18px;white-space:pre;font-family:'Liberation Mono',monospace;font-size:16px;color:#808080;"><span style="font-size:18px;letter-spacing:-1.182px;line-height:0;position:relative;top:-0.3px">00401192</span></div><div style="position:absolute;left:533px;top:284px;line-height:18px;white-space:pre;font-family:'Liberation Mono',monospace;font-size:16px;letter-spacing:0.4px;color:#000;"><span style="font-size:18px;letter-spacing:-0.802px;line-height:0;position:relative;top:-0.3px">56</span></div><div style="position:absolute;left:738px;top:284px;line-height:18px;white-space:pre;font-family:'Liberation Mono',monospace;font-size:16px;letter-spacing:0.4px;color:#000;"><span style="color:#0000ff">push</span> <span style="color:#008000">esi</span></div><div style="position:absolute;left:1136px;top:284px;line-height:18px;white-space:pre;font-family:'Liberation Mono',monospace;font-size:16px;color:#b05a00;">esi:EntryPoint</div><div style="position:absolute;left:353px;top:289px;width:6px;height:6px;border-radius:50%;background:#808080"></div><div style="position:absolute;left:382px;top:302px;line-height:18px;white-space:pre;font-family:'Liberation Mono',monospace;font-size:16px;color:#808080;"><span style="font-size:18px;letter-spacing:-1.182px;line-height:0;position:relative;top:-0.3px">00401193</span></div><div style="position:absolute;left:533px;top:302px;line-height:18px;white-space:pre;font-family:'Liberation Mono',monospace;font-size:16px;letter-spacing:0.4px;color:#000;"><span style="font-size:18px;letter-spacing:-0.802px;line-height:0;position:relative;top:-0.3px">57</span></div><div style="position:absolute;left:738px;top:302px;line-height:18px;white-space:pre;font-family:'Liberation Mono',monospace;font-size:16px;letter-spacing:0.4px;color:#000;"><span style="color:#0000ff">push</span> <span style="color:#008000">edi</span></div><div style="position:absolute;left:1136px;top:302px;line-height:18px;white-space:pre;font-family:'Liberation Mono',monospace;font-size:16px;color:#b05a00;">edi:EntryPoint</div><div style="position:absolute;left:353px;top:307px;width:6px;height:6px;border-radius:50%;background:#808080"></div><div style="position:absolute;left:382px;top:320px;line-height:18px;white-space:pre;font-family:'Liberation Mono',monospace;font-size:16px;color:#fff;"><span style="font-size:18px;letter-spacing:-1.182px;line-height:0;position:relative;top:-0.3px">00401194</span></div><div style="position:absolute;left:533px;top:320px;line-height:18px;white-space:pre;font-family:'Liberation Mono',monospace;font-size:16px;letter-spacing:0.4px;color:#000;"><span style="font-size:18px;letter-spacing:-0.802px;line-height:0;position:relative;top:-0.3px">8965</span> E<span style="font-size:18px;letter-spacing:-0.802px;line-height:0;position:relative;top:-0.3px">8</span></div><div style="position:absolute;left:738px;top:320px;line-height:18px;white-space:pre;font-family:'Liberation Mono',monospace;font-size:16px;letter-spacing:0.4px;color:#000;">mov <span style="color:#000080">dword ptr</span> <span style="color:#ff00ff">ss</span>:<span style="background:#00ffff;color:#000;display:inline-block;height:18px">[</span><span style="color:#b03434">ebp</span><span style="color:#ff8000">-</span><span style="color:#828200"><span style="font-size:18px;letter-spacing:-0.802px;line-height:0;position:relative;top:-0.3px">18</span></span><span style="background:#00ffff;color:#000;display:inline-block;height:18px">]</span>,<span style="color:#008000">esp</span></div><div style="position:absolute;left:353px;top:325px;width:6px;height:6px;border-radius:50%;background:#808080"></div><div style="position:absolute;left:382px;top:338px;line-height:18px;white-space:pre;font-family:'Liberation Mono',monospace;font-size:16px;color:#808080;"><span style="font-size:18px;letter-spacing:-1.182px;line-height:0;position:relative;top:-0.3px">00401197</span></div><div style="position:absolute;left:533px;top:338px;line-height:18px;white-space:pre;font-family:'Liberation Mono',monospace;font-size:16px;letter-spacing:0.4px;color:#000;">FF<span style="font-size:18px;letter-spacing:-0.802px;line-height:0;position:relative;top:-0.3px">15</span> <span style="font-size:18px;letter-spacing:-0.802px;line-height:0;position:relative;top:-0.3px">04704000</span></div><div style="position:absolute;left:738px;top:338px;line-height:18px;white-space:pre;font-family:'Liberation Mono',monospace;font-size:16px;letter-spacing:0.4px;color:#000;"><span style="background:#00ffff;color:#000;display:inline-block;height:18px">call</span> <span style="color:#000080">dword ptr</span> <span style="color:#ff00ff">ds</span>:[<span style="background:#ffff00;color:#000;display:inline-block;height:18px">&lt;&amp;GetVersion&gt;</span>]</div><div style="position:absolute;left:353px;top:343px;width:6px;height:6px;border-radius:50%;background:#808080"></div><div style="position:absolute;left:382px;top:356px;line-height:18px;white-space:pre;font-family:'Liberation Mono',monospace;font-size:16px;color:#808080;"><span style="font-size:18px;letter-spacing:-1.182px;line-height:0;position:relative;top:-0.3px">0040119</span>D</div><div style="position:absolute;left:533px;top:356px;line-height:18px;white-space:pre;font-family:'Liberation Mono',monospace;font-size:16px;letter-spacing:0.4px;color:#000;"><span style="font-size:18px;letter-spacing:-0.802px;line-height:0;position:relative;top:-0.3px">33</span>D<span style="font-size:18px;letter-spacing:-0.802px;line-height:0;position:relative;top:-0.3px">2</span></div><div style="position:absolute;left:738px;top:356px;line-height:18px;white-space:pre;font-family:'Liberation Mono',monospace;font-size:16px;letter-spacing:0.4px;color:#000;">xor <span style="color:#008000">edx</span>,<span style="color:#008000">edx</span></div><div style="position:absolute;left:1136px;top:356px;line-height:18px;white-space:pre;font-family:'Liberation Mono',monospace;font-size:16px;color:#b05a00;">edx:EntryPoint</div><div style="position:absolute;left:353px;top:361px;width:6px;height:6px;border-radius:50%;background:#808080"></div><div style="position:absolute;left:382px;top:374px;line-height:18px;white-space:pre;font-family:'Liberation Mono',monospace;font-size:16px;color:#808080;"><span style="font-size:18px;letter-spacing:-1.182px;line-height:0;position:relative;top:-0.3px">0040119</span>F</div><div style="position:absolute;left:533px;top:374px;line-height:18px;white-space:pre;font-family:'Liberation Mono',monospace;font-size:16px;letter-spacing:0.4px;color:#000;"><span style="font-size:18px;letter-spacing:-0.802px;line-height:0;position:relative;top:-0.3px">8</span>AD<span style="font-size:18px;letter-spacing:-0.802px;line-height:0;position:relative;top:-0.3px">4</span></div><div style="position:absolute;left:738px;top:374px;line-height:18px;white-space:pre;font-family:'Liberation Mono',monospace;font-size:16px;letter-spacing:0.4px;color:#000;">mov <span style="color:#008000">dl</span>,<span style="color:#008000">ah</span></div><div style="position:absolute;left:353px;top:379px;width:6px;height:6px;border-radius:50%;background:#808080"></div><div style="position:absolute;left:382px;top:392px;line-height:18px;white-space:pre;font-family:'Liberation Mono',monospace;font-size:16px;color:#808080;"><span style="font-size:18px;letter-spacing:-1.182px;line-height:0;position:relative;top:-0.3px">004011</span>A<span style="font-size:18px;letter-spacing:-1.182px;line-height:0;position:relative;top:-0.3px">1</span></div><div style="position:absolute;left:533px;top:392px;line-height:18px;white-space:pre;font-family:'Liberation Mono',monospace;font-size:16px;letter-spacing:0.4px;color:#000;"><span style="font-size:18px;letter-spacing:-0.802px;line-height:0;position:relative;top:-0.3px">8915</span> C<span style="font-size:18px;letter-spacing:-0.802px;line-height:0;position:relative;top:-0.3px">8</span>A<span style="font-size:18px;letter-spacing:-0.802px;line-height:0;position:relative;top:-0.3px">94000</span></div><div style="position:absolute;left:738px;top:392px;line-height:18px;white-space:pre;font-family:'Liberation Mono',monospace;font-size:16px;letter-spacing:0.4px;color:#000;">mov <span style="color:#000080">dword ptr</span> <span style="color:#ff00ff">ds</span>:[<span style="background:#ffff00;color:#000;display:inline-block;height:18px"><span style="font-size:18px;letter-spacing:-0.802px;line-height:0;position:relative;top:-0.3px">40</span>A<span style="font-size:18px;letter-spacing:-0.802px;line-height:0;position:relative;top:-0.3px">9</span>C<span style="font-size:18px;letter-spacing:-0.802px;line-height:0;position:relative;top:-0.3px">8</span></span>],<span style="color:#008000">edx</span></div><div style="position:absolute;left:1136px;top:392px;line-height:18px;white-space:pre;font-family:'Liberation Mono',monospace;font-size:16px;color:#b05a00;">edx:EntryPoint</div><div style="position:absolute;left:353px;top:397px;width:6px;height:6px;border-radius:50%;background:#808080"></div><div style="position:absolute;left:382px;top:410px;line-height:18px;white-space:pre;font-family:'Liberation Mono',monospace;font-size:16px;color:#808080;"><span style="font-size:18px;letter-spacing:-1.182px;line-height:0;position:relative;top:-0.3px">004011</span>A<span style="font-size:18px;letter-spacing:-1.182px;line-height:0;position:relative;top:-0.3px">7</span></div><div style="position:absolute;left:533px;top:410px;line-height:18px;white-space:pre;font-family:'Liberation Mono',monospace;font-size:16px;letter-spacing:0.4px;color:#000;"><span style="font-size:18px;letter-spacing:-0.802px;line-height:0;position:relative;top:-0.3px">8</span>BC<span style="font-size:18px;letter-spacing:-0.802px;line-height:0;position:relative;top:-0.3px">8</span></div><div style="position:absolute;left:738px;top:410px;line-height:18px;white-space:pre;font-family:'Liberation Mono',monospace;font-size:16px;letter-spacing:0.4px;color:#000;">mov <span style="color:#008000">ecx</span>,<span style="color:#008000">eax</span></div><div style="position:absolute;left:1136px;top:410px;line-height:18px;white-space:pre;font-family:'Liberation Mono',monospace;font-size:16px;color:#b05a00;">ecx:EntryPoint</div><div style="position:absolute;left:353px;top:415px;width:6px;height:6px;border-radius:50%;background:#808080"></div><div style="position:absolute;left:382px;top:428px;line-height:18px;white-space:pre;font-family:'Liberation Mono',monospace;font-size:16px;color:#808080;"><span style="font-size:18px;letter-spacing:-1.182px;line-height:0;position:relative;top:-0.3px">004011</span>A<span style="font-size:18px;letter-spacing:-1.182px;line-height:0;position:relative;top:-0.3px">9</span></div><div style="position:absolute;left:533px;top:428px;line-height:18px;white-space:pre;font-family:'Liberation Mono',monospace;font-size:16px;letter-spacing:0.4px;color:#000;"><span style="font-size:18px;letter-spacing:-0.802px;line-height:0;position:relative;top:-0.3px">81</span>E<span style="font-size:18px;letter-spacing:-0.802px;line-height:0;position:relative;top:-0.3px">1</span> FF<span style="font-size:18px;letter-spacing:-0.802px;line-height:0;position:relative;top:-0.3px">000000</span></div><div style="position:absolute;left:738px;top:428px;line-height:18px;white-space:pre;font-family:'Liberation Mono',monospace;font-size:16px;letter-spacing:0.4px;color:#000;">and <span style="color:#008000">ecx</span>,<span style="color:#828200">FF</span></div><div style="position:absolute;left:1136px;top:428px;line-height:18px;white-space:pre;font-family:'Liberation Mono',monospace;font-size:16px;color:#b05a00;">ecx:EntryPoint</div><div style="position:absolute;left:353px;top:433px;width:6px;height:6px;border-radius:50%;background:#808080"></div><div style="position:absolute;left:382px;top:446px;line-height:18px;white-space:pre;font-family:'Liberation Mono',monospace;font-size:16px;color:#808080;"><span style="font-size:18px;letter-spacing:-1.182px;line-height:0;position:relative;top:-0.3px">004011</span>AF</div><div style="position:absolute;left:533px;top:446px;line-height:18px;white-space:pre;font-family:'Liberation Mono',monospace;font-size:16px;letter-spacing:0.4px;color:#000;"><span style="font-size:18px;letter-spacing:-0.802px;line-height:0;position:relative;top:-0.3px">890</span>D C<span style="font-size:18px;letter-spacing:-0.802px;line-height:0;position:relative;top:-0.3px">4</span>A<span style="font-size:18px;letter-spacing:-0.802px;line-height:0;position:relative;top:-0.3px">94000</span></div><div style="position:absolute;left:738px;top:446px;line-height:18px;white-space:pre;font-family:'Liberation Mono',monospace;font-size:16px;letter-spacing:0.4px;color:#000;">mov <span style="color:#000080">dword ptr</span> <span style="color:#ff00ff">ds</span>:[<span style="background:#ffff00;color:#000;display:inline-block;height:18px"><span style="font-size:18px;letter-spacing:-0.802px;line-height:0;position:relative;top:-0.3px">40</span>A<span style="font-size:18px;letter-spacing:-0.802px;line-height:0;position:relative;top:-0.3px">9</span>C<span style="font-size:18px;letter-spacing:-0.802px;line-height:0;position:relative;top:-0.3px">4</span></span>],<span style="color:#008000">ecx</span></div><div style="position:absolute;left:1136px;top:446px;line-height:18px;white-space:pre;font-family:'Liberation Mono',monospace;font-size:16px;color:#b05a00;">ecx:EntryPoint</div><div style="position:absolute;left:353px;top:451px;width:6px;height:6px;border-radius:50%;background:#808080"></div><div style="position:absolute;left:382px;top:464px;line-height:18px;white-space:pre;font-family:'Liberation Mono',monospace;font-size:16px;color:#808080;"><span style="font-size:18px;letter-spacing:-1.182px;line-height:0;position:relative;top:-0.3px">004011</span>B<span style="font-size:18px;letter-spacing:-1.182px;line-height:0;position:relative;top:-0.3px">5</span></div><div style="position:absolute;left:533px;top:464px;line-height:18px;white-space:pre;font-family:'Liberation Mono',monospace;font-size:16px;letter-spacing:0.4px;color:#000;">C<span style="font-size:18px;letter-spacing:-0.802px;line-height:0;position:relative;top:-0.3px">1</span>E<span style="font-size:18px;letter-spacing:-0.802px;line-height:0;position:relative;top:-0.3px">1</span> <span style="font-size:18px;letter-spacing:-0.802px;line-height:0;position:relative;top:-0.3px">08</span></div><div style="position:absolute;left:738px;top:464px;line-height:18px;white-space:pre;font-family:'Liberation Mono',monospace;font-size:16px;letter-spacing:0.4px;color:#000;">shl <span style="color:#008000">ecx</span>,<span style="color:#828200"><span style="font-size:18px;letter-spacing:-0.802px;line-height:0;position:relative;top:-0.3px">8</span></span></div><div style="position:absolute;left:1136px;top:464px;line-height:18px;white-space:pre;font-family:'Liberation Mono',monospace;font-size:16px;color:#b05a00;">ecx:EntryPoint</div><div style="position:absolute;left:353px;top:469px;width:6px;height:6px;border-radius:50%;background:#808080"></div><div style="position:absolute;left:382px;top:482px;line-height:18px;white-space:pre;font-family:'Liberation Mono',monospace;font-size:16px;color:#808080;"><span style="font-size:18px;letter-spacing:-1.182px;line-height:0;position:relative;top:-0.3px">004011</span>B<span style="font-size:18px;letter-spacing:-1.182px;line-height:0;position:relative;top:-0.3px">8</span></div><div style="position:absolute;left:533px;top:482px;line-height:18px;white-space:pre;font-family:'Liberation Mono',monospace;font-size:16px;letter-spacing:0.4px;color:#000;"><span style="font-size:18px;letter-spacing:-0.802px;line-height:0;position:relative;top:-0.3px">03</span>CA</div><div style="position:absolute;left:738px;top:482px;line-height:18px;white-space:pre;font-family:'Liberation Mono',monospace;font-size:16px;letter-spacing:0.4px;color:#000;">add <span style="color:#008000">ecx</span>,<span style="color:#008000">edx</span></div><div style="position:absolute;left:1136px;top:482px;line-height:18px;white-space:pre;font-family:'Liberation Mono',monospace;font-size:16px;color:#b05a00;">ecx:EntryPoint, edx:EntryPoint</div><div style="position:absolute;left:353px;top:487px;width:6px;height:6px;border-radius:50%;background:#808080"></div><div style="position:absolute;left:382px;top:500px;line-height:18px;white-space:pre;font-family:'Liberation Mono',monospace;font-size:16px;color:#808080;"><span style="font-size:18px;letter-spacing:-1.182px;line-height:0;position:relative;top:-0.3px">004011</span>BA</div><div style="position:absolute;left:533px;top:500px;line-height:18px;white-space:pre;font-family:'Liberation Mono',monospace;font-size:16px;letter-spacing:0.4px;color:#000;"><span style="font-size:18px;letter-spacing:-0.802px;line-height:0;position:relative;top:-0.3px">890</span>D C<span style="font-size:18px;letter-spacing:-0.802px;line-height:0;position:relative;top:-0.3px">0</span>A<span style="font-size:18px;letter-spacing:-0.802px;line-height:0;position:relative;top:-0.3px">94000</span></div><div style="position:absolute;left:738px;top:500px;line-height:18px;white-space:pre;font-family:'Liberation Mono',monospace;font-size:16px;letter-spacing:0.4px;color:#000;">mov <span style="color:#000080">dword ptr</span> <span style="color:#ff00ff">ds</span>:[<span style="background:#ffff00;color:#000;display:inline-block;height:18px"><span style="font-size:18px;letter-spacing:-0.802px;line-height:0;position:relative;top:-0.3px">40</span>A<span style="font-size:18px;letter-spacing:-0.802px;line-height:0;position:relative;top:-0.3px">9</span>C<span style="font-size:18px;letter-spacing:-0.802px;line-height:0;position:relative;top:-0.3px">0</span></span>],<span style="color:#008000">ecx</span></div><div style="position:absolute;left:1136px;top:500px;line-height:18px;white-space:pre;font-family:'Liberation Mono',monospace;font-size:16px;color:#b05a00;">ecx:EntryPoint</div><div style="position:absolute;left:353px;top:505px;width:6px;height:6px;border-radius:50%;background:#808080"></div><div style="position:absolute;left:382px;top:518px;line-height:18px;white-space:pre;font-family:'Liberation Mono',monospace;font-size:16px;color:#808080;"><span style="font-size:18px;letter-spacing:-1.182px;line-height:0;position:relative;top:-0.3px">004011</span>C<span style="font-size:18px;letter-spacing:-1.182px;line-height:0;position:relative;top:-0.3px">0</span></div><div style="position:absolute;left:533px;top:518px;line-height:18px;white-space:pre;font-family:'Liberation Mono',monospace;font-size:16px;letter-spacing:0.4px;color:#000;">C<span style="font-size:18px;letter-spacing:-0.802px;line-height:0;position:relative;top:-0.3px">1</span>E<span style="font-size:18px;letter-spacing:-0.802px;line-height:0;position:relative;top:-0.3px">8</span> <span style="font-size:18px;letter-spacing:-0.802px;line-height:0;position:relative;top:-0.3px">10</span></div><div style="position:absolute;left:738px;top:518px;line-height:18px;white-space:pre;font-family:'Liberation Mono',monospace;font-size:16px;letter-spacing:0.4px;color:#000;">shr <span style="color:#008000">eax</span>,<span style="color:#828200"><span style="font-size:18px;letter-spacing:-0.802px;line-height:0;position:relative;top:-0.3px">10</span></span></div><div style="position:absolute;left:353px;top:523px;width:6px;height:6px;border-radius:50%;background:#808080"></div><div style="position:absolute;left:382px;top:536px;line-height:18px;white-space:pre;font-family:'Liberation Mono',monospace;font-size:16px;color:#808080;"><span style="font-size:18px;letter-spacing:-1.182px;line-height:0;position:relative;top:-0.3px">004011</span>C<span style="font-size:18px;letter-spacing:-1.182px;line-height:0;position:relative;top:-0.3px">3</span></div><div style="position:absolute;left:533px;top:536px;line-height:18px;white-space:pre;font-family:'Liberation Mono',monospace;font-size:16px;letter-spacing:0.4px;color:#000;">A<span style="font-size:18px;letter-spacing:-0.802px;line-height:0;position:relative;top:-0.3px">3</span> BCA<span style="font-size:18px;letter-spacing:-0.802px;line-height:0;position:relative;top:-0.3px">94000</span></div><div style="position:absolute;left:738px;top:536px;line-height:18px;white-space:pre;font-family:'Liberation Mono',monospace;font-size:16px;letter-spacing:0.4px;color:#000;">mov <span style="color:#000080">dword ptr</span> <span style="color:#ff00ff">ds</span>:[<span style="background:#ffff00;color:#000;display:inline-block;height:18px"><span style="font-size:18px;letter-spacing:-0.802px;line-height:0;position:relative;top:-0.3px">40</span>A<span style="font-size:18px;letter-spacing:-0.802px;line-height:0;position:relative;top:-0.3px">9</span>BC</span>],<span style="color:#008000">eax</span></div><div style="position:absolute;left:353px;top:541px;width:6px;height:6px;border-radius:50%;background:#808080"></div><div style="position:absolute;left:382px;top:554px;line-height:18px;white-space:pre;font-family:'Liberation Mono',monospace;font-size:16px;color:#808080;"><span style="font-size:18px;letter-spacing:-1.182px;line-height:0;position:relative;top:-0.3px">004011</span>C<span style="font-size:18px;letter-spacing:-1.182px;line-height:0;position:relative;top:-0.3px">8</span></div><div style="position:absolute;left:533px;top:554px;line-height:18px;white-space:pre;font-family:'Liberation Mono',monospace;font-size:16px;letter-spacing:0.4px;color:#000;"><span style="font-size:18px;letter-spacing:-0.802px;line-height:0;position:relative;top:-0.3px">6</span>A <span style="font-size:18px;letter-spacing:-0.802px;line-height:0;position:relative;top:-0.3px">00</span></div><div style="position:absolute;left:738px;top:554px;line-height:18px;white-space:pre;font-family:'Liberation Mono',monospace;font-size:16px;letter-spacing:0.4px;color:#000;"><span style="color:#0000ff">push</span> <span style="color:#828200"><span style="font-size:18px;letter-spacing:-0.802px;line-height:0;position:relative;top:-0.3px">0</span></span></div><div style="position:absolute;left:353px;top:559px;width:6px;height:6px;border-radius:50%;background:#808080"></div><div style="position:absolute;left:382px;top:572px;line-height:18px;white-space:pre;font-family:'Liberation Mono',monospace;font-size:16px;color:#808080;"><span style="font-size:18px;letter-spacing:-1.182px;line-height:0;position:relative;top:-0.3px">004011</span>CA</div><div style="position:absolute;left:533px;top:572px;line-height:18px;white-space:pre;font-family:'Liberation Mono',monospace;font-size:16px;letter-spacing:0.4px;color:#000;">E<span style="font-size:18px;letter-spacing:-0.802px;line-height:0;position:relative;top:-0.3px">8</span> <span style="font-size:18px;letter-spacing:-0.802px;line-height:0;position:relative;top:-0.3px">431</span>F<span style="font-size:18px;letter-spacing:-0.802px;line-height:0;position:relative;top:-0.3px">0000</span></div><div style="position:absolute;left:738px;top:572px;line-height:18px;white-space:pre;font-family:'Liberation Mono',monospace;font-size:16px;letter-spacing:0.4px;color:#000;"><span style="background:#00ffff;color:#000;display:inline-block;height:18px">call</span> <span style="background:#ffff00;color:#000;display:inline-block;height:18px">re<span style="font-size:18px;letter-spacing:-0.802px;line-height:0;position:relative;top:-0.3px">6</span>.<span style="font-size:18px;letter-spacing:-0.802px;line-height:0;position:relative;top:-0.3px">403112</span></span></div><div style="position:absolute;left:353px;top:577px;width:6px;height:6px;border-radius:50%;background:#808080"></div><div style="position:absolute;left:382px;top:590px;line-height:18px;white-space:pre;font-family:'Liberation Mono',monospace;font-size:16px;color:#808080;"><span style="font-size:18px;letter-spacing:-1.182px;line-height:0;position:relative;top:-0.3px">004011</span>CF</div><div style="position:absolute;left:533px;top:590px;line-height:18px;white-space:pre;font-family:'Liberation Mono',monospace;font-size:16px;letter-spacing:0.4px;color:#000;"><span style="font-size:18px;letter-spacing:-0.802px;line-height:0;position:relative;top:-0.3px">59</span></div><div style="position:absolute;left:738px;top:590px;line-height:18px;white-space:pre;font-family:'Liberation Mono',monospace;font-size:16px;letter-spacing:0.4px;color:#000;"><span style="color:#0000ff">pop</span> <span style="color:#008000">ecx</span></div><div style="position:absolute;left:1136px;top:590px;line-height:18px;white-space:pre;font-family:'Liberation Mono',monospace;font-size:16px;color:#b05a00;">ecx:EntryPoint</div><div style="position:absolute;left:353px;top:595px;width:6px;height:6px;border-radius:50%;background:#808080"></div><div style="position:absolute;left:382px;top:608px;line-height:18px;white-space:pre;font-family:'Liberation Mono',monospace;font-size:16px;color:#808080;"><span style="font-size:18px;letter-spacing:-1.182px;line-height:0;position:relative;top:-0.3px">004011</span>D<span style="font-size:18px;letter-spacing:-1.182px;line-height:0;position:relative;top:-0.3px">0</span></div><div style="position:absolute;left:533px;top:608px;line-height:18px;white-space:pre;font-family:'Liberation Mono',monospace;font-size:16px;letter-spacing:0.4px;color:#000;"><span style="font-size:18px;letter-spacing:-0.802px;line-height:0;position:relative;top:-0.3px">85</span>C<span style="font-size:18px;letter-spacing:-0.802px;line-height:0;position:relative;top:-0.3px">0</span></div><div style="position:absolute;left:738px;top:608px;line-height:18px;white-space:pre;font-family:'Liberation Mono',monospace;font-size:16px;letter-spacing:0.4px;color:#000;">test <span style="color:#008000">eax</span>,<span style="color:#008000">eax</span></div><div style="position:absolute;left:353px;top:613px;width:6px;height:6px;border-radius:50%;background:#808080"></div><div style="position:absolute;left:382px;top:626px;line-height:18px;white-space:pre;font-family:'Liberation Mono',monospace;font-size:16px;color:#808080;"><span style="font-size:18px;letter-spacing:-1.182px;line-height:0;position:relative;top:-0.3px">004011</span>D<span style="font-size:18px;letter-spacing:-1.182px;line-height:0;position:relative;top:-0.3px">2</span></div><div style="position:absolute;left:533px;top:626px;line-height:18px;white-space:pre;font-family:'Liberation Mono',monospace;font-size:16px;letter-spacing:0.4px;color:#000;"><span style="font-size:18px;letter-spacing:-0.802px;line-height:0;position:relative;top:-0.3px">75</span> <span style="font-size:18px;letter-spacing:-0.802px;line-height:0;position:relative;top:-0.3px">08</span></div><div style="position:absolute;left:738px;top:626px;line-height:18px;white-space:pre;font-family:'Liberation Mono',monospace;font-size:16px;letter-spacing:0.4px;color:#000;"><span style="background:#ffff00;color:#ff0000;display:inline-block;height:18px">jne</span> <span style="background:#ffff00;color:#000;display:inline-block;height:18px">re<span style="font-size:18px;letter-spacing:-0.802px;line-height:0;position:relative;top:-0.3px">6</span>.<span style="font-size:18px;letter-spacing:-0.802px;line-height:0;position:relative;top:-0.3px">4011</span>DC</span></div><div style="position:absolute;left:353px;top:631px;width:6px;height:6px;border-radius:50%;background:#808080"></div><div style="position:absolute;left:382px;top:644px;line-height:18px;white-space:pre;font-family:'Liberation Mono',monospace;font-size:16px;color:#808080;"><span style="font-size:18px;letter-spacing:-1.182px;line-height:0;position:relative;top:-0.3px">004011</span>D<span style="font-size:18px;letter-spacing:-1.182px;line-height:0;position:relative;top:-0.3px">4</span></div><div style="position:absolute;left:533px;top:644px;line-height:18px;white-space:pre;font-family:'Liberation Mono',monospace;font-size:16px;letter-spacing:0.4px;color:#000;"><span style="font-size:18px;letter-spacing:-0.802px;line-height:0;position:relative;top:-0.3px">6</span>A <span style="font-size:18px;letter-spacing:-0.802px;line-height:0;position:relative;top:-0.3px">1</span>C</div><div style="position:absolute;left:738px;top:644px;line-height:18px;white-space:pre;font-family:'Liberation Mono',monospace;font-size:16px;letter-spacing:0.4px;color:#000;"><span style="color:#0000ff">push</span> <span style="color:#828200"><span style="font-size:18px;letter-spacing:-0.802px;line-height:0;position:relative;top:-0.3px">1</span>C</span></div><div style="position:absolute;left:353px;top:649px;width:6px;height:6px;border-radius:50%;background:#808080"></div><div style="position:absolute;left:382px;top:662px;line-height:18px;white-space:pre;font-family:'Liberation Mono',monospace;font-size:16px;color:#808080;"><span style="font-size:18px;letter-spacing:-1.182px;line-height:0;position:relative;top:-0.3px">004011</span>D<span style="font-size:18px;letter-spacing:-1.182px;line-height:0;position:relative;top:-0.3px">6</span></div><div style="position:absolute;left:533px;top:662px;line-height:18px;white-space:pre;font-family:'Liberation Mono',monospace;font-size:16px;letter-spacing:0.4px;color:#000;">E<span style="font-size:18px;letter-spacing:-0.802px;line-height:0;position:relative;top:-0.3px">8</span> <span style="font-size:18px;letter-spacing:-0.802px;line-height:0;position:relative;top:-0.3px">9</span>A<span style="font-size:18px;letter-spacing:-0.802px;line-height:0;position:relative;top:-0.3px">000000</span></div><div style="position:absolute;left:738px;top:662px;line-height:18px;white-space:pre;font-family:'Liberation Mono',monospace;font-size:16px;letter-spacing:0.4px;color:#000;"><span style="background:#00ffff;color:#000;display:inline-block;height:18px">call</span> <span style="background:#ffff00;color:#000;display:inline-block;height:18px">re<span style="font-size:18px;letter-spacing:-0.802px;line-height:0;position:relative;top:-0.3px">6</span>.<span style="font-size:18px;letter-spacing:-0.802px;line-height:0;position:relative;top:-0.3px">401275</span></span></div><div style="position:absolute;left:353px;top:667px;width:6px;height:6px;border-radius:50%;background:#808080"></div><div style="position:absolute;left:382px;top:680px;line-height:18px;white-space:pre;font-family:'Liberation Mono',monospace;font-size:16px;color:#808080;"><span style="font-size:18px;letter-spacing:-1.182px;line-height:0;position:relative;top:-0.3px">004011</span>DB</div><div style="position:absolute;left:533px;top:680px;line-height:18px;white-space:pre;font-family:'Liberation Mono',monospace;font-size:16px;letter-spacing:0.4px;color:#000;"><span style="font-size:18px;letter-spacing:-0.802px;line-height:0;position:relative;top:-0.3px">59</span></div><div style="position:absolute;left:738px;top:680px;line-height:18px;white-space:pre;font-family:'Liberation Mono',monospace;font-size:16px;letter-spacing:0.4px;color:#000;"><span style="color:#0000ff">pop</span> <span style="color:#008000">ecx</span></div><div style="position:absolute;left:1136px;top:680px;line-height:18px;white-space:pre;font-family:'Liberation Mono',monospace;font-size:16px;color:#b05a00;">ecx:EntryPoint</div><div style="position:absolute;left:353px;top:685px;width:6px;height:6px;border-radius:50%;background:#808080"></div><div style="position:absolute;left:382px;top:698px;line-height:18px;white-space:pre;font-family:'Liberation Mono',monospace;font-size:16px;color:#808080;"><span style="font-size:18px;letter-spacing:-1.182px;line-height:0;position:relative;top:-0.3px">004011</span>DC</div><div style="position:absolute;left:533px;top:698px;line-height:18px;white-space:pre;font-family:'Liberation Mono',monospace;font-size:16px;letter-spacing:0.4px;color:#000;"><span style="font-size:18px;letter-spacing:-0.802px;line-height:0;position:relative;top:-0.3px">8365</span> FC <span style="font-size:18px;letter-spacing:-0.802px;line-height:0;position:relative;top:-0.3px">00</span></div><div style="position:absolute;left:738px;top:698px;line-height:18px;white-space:pre;font-family:'Liberation Mono',monospace;font-size:16px;letter-spacing:0.4px;color:#000;">and <span style="color:#000080">dword ptr</span> <span style="color:#ff00ff">ss</span>:<span style="background:#00ffff;color:#000;display:inline-block;height:18px">[</span><span style="color:#b03434">ebp</span><span style="color:#ff8000">-</span><span style="color:#828200"><span style="font-size:18px;letter-spacing:-0.802px;line-height:0;position:relative;top:-0.3px">4</span></span><span style="background:#00ffff;color:#000;display:inline-block;height:18px">]</span>,<span style="color:#828200"><span style="font-size:18px;letter-spacing:-0.802px;line-height:0;position:relative;top:-0.3px">0</span></span></div><div style="position:absolute;left:353px;top:703px;width:6px;height:6px;border-radius:50%;background:#808080"></div><div style="position:absolute;left:382px;top:716px;line-height:18px;white-space:pre;font-family:'Liberation Mono',monospace;font-size:16px;color:#808080;"><span style="font-size:18px;letter-spacing:-1.182px;line-height:0;position:relative;top:-0.3px">004011</span>E<span style="font-size:18px;letter-spacing:-1.182px;line-height:0;position:relative;top:-0.3px">0</span></div><div style="position:absolute;left:533px;top:716px;line-height:18px;white-space:pre;font-family:'Liberation Mono',monospace;font-size:16px;letter-spacing:0.4px;color:#000;">E<span style="font-size:18px;letter-spacing:-0.802px;line-height:0;position:relative;top:-0.3px">8</span> <span style="font-size:18px;letter-spacing:-0.802px;line-height:0;position:relative;top:-0.3px">0</span>D<span style="font-size:18px;letter-spacing:-0.802px;line-height:0;position:relative;top:-0.3px">1</span>C<span style="font-size:18px;letter-spacing:-0.802px;line-height:0;position:relative;top:-0.3px">0000</span></div><div style="position:absolute;left:738px;top:716px;line-height:18px;white-space:pre;font-family:'Liberation Mono',monospace;font-size:16px;letter-spacing:0.4px;color:#000;"><span style="background:#00ffff;color:#000;display:inline-block;height:18px">call</span> <span style="background:#ffff00;color:#000;display:inline-block;height:18px">re<span style="font-size:18px;letter-spacing:-0.802px;line-height:0;position:relative;top:-0.3px">6</span>.<span style="font-size:18px;letter-spacing:-0.802px;line-height:0;position:relative;top:-0.3px">402</span>DF<span style="font-size:18px;letter-spacing:-0.802px;line-height:0;position:relative;top:-0.3px">2</span></span></div><div style="position:absolute;left:353px;top:721px;width:6px;height:6px;border-radius:50%;background:#808080"></div><div style="position:absolute;left:382px;top:734px;line-height:18px;white-space:pre;font-family:'Liberation Mono',monospace;font-size:16px;color:#808080;"><span style="font-size:18px;letter-spacing:-1.182px;line-height:0;position:relative;top:-0.3px">004011</span>E<span style="font-size:18px;letter-spacing:-1.182px;line-height:0;position:relative;top:-0.3px">5</span></div><div style="position:absolute;left:533px;top:734px;line-height:18px;white-space:pre;font-family:'Liberation Mono',monospace;font-size:16px;letter-spacing:0.4px;color:#000;">FF<span style="font-size:18px;letter-spacing:-0.802px;line-height:0;position:relative;top:-0.3px">15</span> <span style="font-size:18px;letter-spacing:-0.802px;line-height:0;position:relative;top:-0.3px">00704000</span></div><div style="position:absolute;left:738px;top:734px;line-height:18px;white-space:pre;font-family:'Liberation Mono',monospace;font-size:16px;letter-spacing:0.4px;color:#000;"><span style="background:#00ffff;color:#000;display:inline-block;height:18px">call</span> <span style="color:#000080">dword ptr</span> <span style="color:#ff00ff">ds</span>:[<span style="background:#ffff00;color:#000;display:inline-block;height:18px">&lt;&amp;GetCommandLineA&gt;</span>]</div><div style="position:absolute;left:353px;top:739px;width:6px;height:6px;border-radius:50%;background:#808080"></div><div style="position:absolute;left:382px;top:752px;line-height:18px;white-space:pre;font-family:'Liberation Mono',monospace;font-size:16px;color:#808080;"><span style="font-size:18px;letter-spacing:-1.182px;line-height:0;position:relative;top:-0.3px">004011</span>EB</div><div style="position:absolute;left:533px;top:752px;line-height:18px;white-space:pre;font-family:'Liberation Mono',monospace;font-size:16px;letter-spacing:0.4px;color:#000;">A<span style="font-size:18px;letter-spacing:-0.802px;line-height:0;position:relative;top:-0.3px">3</span> C<span style="font-size:18px;letter-spacing:-0.802px;line-height:0;position:relative;top:-0.3px">4</span>BE<span style="font-size:18px;letter-spacing:-0.802px;line-height:0;position:relative;top:-0.3px">4000</span></div><div style="position:absolute;left:738px;top:752px;line-height:18px;white-space:pre;font-family:'Liberation Mono',monospace;font-size:16px;letter-spacing:0.4px;color:#000;">mov <span style="color:#000080">dword ptr</span> <span style="color:#ff00ff">ds</span>:[<span style="background:#ffff00;color:#000;display:inline-block;height:18px"><span style="font-size:18px;letter-spacing:-0.802px;line-height:0;position:relative;top:-0.3px">40</span>BEC<span style="font-size:18px;letter-spacing:-0.802px;line-height:0;position:relative;top:-0.3px">4</span></span>],<span style="color:#008000">eax</span></div><div style="position:absolute;left:353px;top:757px;width:6px;height:6px;border-radius:50%;background:#808080"></div><div style="position:absolute;left:382px;top:770px;line-height:18px;white-space:pre;font-family:'Liberation Mono',monospace;font-size:16px;color:#808080;"><span style="font-size:18px;letter-spacing:-1.182px;line-height:0;position:relative;top:-0.3px">004011</span>F<span style="font-size:18px;letter-spacing:-1.182px;line-height:0;position:relative;top:-0.3px">0</span></div><div style="position:absolute;left:533px;top:770px;line-height:18px;white-space:pre;font-family:'Liberation Mono',monospace;font-size:16px;letter-spacing:0.4px;color:#000;">E<span style="font-size:18px;letter-spacing:-0.802px;line-height:0;position:relative;top:-0.3px">8</span> CB<span style="font-size:18px;letter-spacing:-0.802px;line-height:0;position:relative;top:-0.3px">1</span>A<span style="font-size:18px;letter-spacing:-0.802px;line-height:0;position:relative;top:-0.3px">0000</span></div><div style="position:absolute;left:738px;top:770px;line-height:18px;white-space:pre;font-family:'Liberation Mono',monospace;font-size:16px;letter-spacing:0.4px;color:#000;"><span style="background:#00ffff;color:#000;display:inline-block;height:18px">call</span> <span style="background:#ffff00;color:#000;display:inline-block;height:18px">re<span style="font-size:18px;letter-spacing:-0.802px;line-height:0;position:relative;top:-0.3px">6</span>.<span style="font-size:18px;letter-spacing:-0.802px;line-height:0;position:relative;top:-0.3px">402</span>CC<span style="font-size:18px;letter-spacing:-0.802px;line-height:0;position:relative;top:-0.3px">0</span></span></div><div style="position:absolute;left:353px;top:775px;width:6px;height:6px;border-radius:50%;background:#808080"></div><div style="position:absolute;left:382px;top:788px;line-height:18px;white-space:pre;font-family:'Liberation Mono',monospace;font-size:16px;color:#808080;"><span style="font-size:18px;letter-spacing:-1.182px;line-height:0;position:relative;top:-0.3px">004011</span>F<span style="font-size:18px;letter-spacing:-1.182px;line-height:0;position:relative;top:-0.3px">5</span></div><div style="position:absolute;left:533px;top:788px;line-height:18px;white-space:pre;font-family:'Liberation Mono',monospace;font-size:16px;letter-spacing:0.4px;color:#000;">A<span style="font-size:18px;letter-spacing:-0.802px;line-height:0;position:relative;top:-0.3px">3</span> <span style="font-size:18px;letter-spacing:-0.802px;line-height:0;position:relative;top:-0.3px">98</span>A<span style="font-size:18px;letter-spacing:-0.802px;line-height:0;position:relative;top:-0.3px">94000</span></div><div style="position:absolute;left:738px;top:788px;line-height:18px;white-space:pre;font-family:'Liberation Mono',monospace;font-size:16px;letter-spacing:0.4px;color:#000;">mov <span style="color:#000080">dword ptr</span> <span style="color:#ff00ff">ds</span>:[<span style="background:#ffff00;color:#000;display:inline-block;height:18px"><span style="font-size:18px;letter-spacing:-0.802px;line-height:0;position:relative;top:-0.3px">40</span>A<span style="font-size:18px;letter-spacing:-0.802px;line-height:0;position:relative;top:-0.3px">998</span></span>],<span style="color:#008000">eax</span></div><div style="position:absolute;left:353px;top:793px;width:6px;height:6px;border-radius:50%;background:#808080"></div><div style="position:absolute;left:382px;top:806px;line-height:18px;white-space:pre;font-family:'Liberation Mono',monospace;font-size:16px;color:#808080;"><span style="font-size:18px;letter-spacing:-1.182px;line-height:0;position:relative;top:-0.3px">004011</span>FA</div><div style="position:absolute;left:533px;top:806px;line-height:18px;white-space:pre;font-family:'Liberation Mono',monospace;font-size:16px;letter-spacing:0.4px;color:#000;">E<span style="font-size:18px;letter-spacing:-0.802px;line-height:0;position:relative;top:-0.3px">8</span> <span style="font-size:18px;letter-spacing:-0.802px;line-height:0;position:relative;top:-0.3px">74180000</span></div><div style="position:absolute;left:738px;top:806px;line-height:18px;white-space:pre;font-family:'Liberation Mono',monospace;font-size:16px;letter-spacing:0.4px;color:#000;"><span style="background:#00ffff;color:#000;display:inline-block;height:18px">call</span> <span style="background:#ffff00;color:#000;display:inline-block;height:18px">re<span style="font-size:18px;letter-spacing:-0.802px;line-height:0;position:relative;top:-0.3px">6</span>.<span style="font-size:18px;letter-spacing:-0.802px;line-height:0;position:relative;top:-0.3px">402</span>A<span style="font-size:18px;letter-spacing:-0.802px;line-height:0;position:relative;top:-0.3px">73</span></span></div><div style="position:absolute;left:353px;top:811px;width:6px;height:6px;border-radius:50%;background:#808080"></div><div style="position:absolute;left:382px;top:824px;line-height:18px;white-space:pre;font-family:'Liberation Mono',monospace;font-size:16px;color:#808080;"><span style="font-size:18px;letter-spacing:-1.182px;line-height:0;position:relative;top:-0.3px">004011</span>FF</div><div style="position:absolute;left:533px;top:824px;line-height:18px;white-space:pre;font-family:'Liberation Mono',monospace;font-size:16px;letter-spacing:0.4px;color:#000;">E<span style="font-size:18px;letter-spacing:-0.802px;line-height:0;position:relative;top:-0.3px">8</span> B<span style="font-size:18px;letter-spacing:-0.802px;line-height:0;position:relative;top:-0.3px">6170000</span></div><div style="position:absolute;left:738px;top:824px;line-height:18px;white-space:pre;font-family:'Liberation Mono',monospace;font-size:16px;letter-spacing:0.4px;color:#000;"><span style="background:#00ffff;color:#000;display:inline-block;height:18px">call</span> <span style="background:#ffff00;color:#000;display:inline-block;height:18px">re<span style="font-size:18px;letter-spacing:-0.802px;line-height:0;position:relative;top:-0.3px">6</span>.<span style="font-size:18px;letter-spacing:-0.802px;line-height:0;position:relative;top:-0.3px">4029</span>BA</span></div><div style="position:absolute;left:353px;top:829px;width:6px;height:6px;border-radius:50%;background:#808080"></div><div style="position:absolute;left:382px;top:842px;line-height:18px;white-space:pre;font-family:'Liberation Mono',monospace;font-size:16px;color:#808080;"><span style="font-size:18px;letter-spacing:-1.182px;line-height:0;position:relative;top:-0.3px">00401204</span></div><div style="position:absolute;left:533px;top:842px;line-height:18px;white-space:pre;font-family:'Liberation Mono',monospace;font-size:16px;letter-spacing:0.4px;color:#000;">E<span style="font-size:18px;letter-spacing:-0.802px;line-height:0;position:relative;top:-0.3px">8</span> <span style="font-size:18px;letter-spacing:-0.802px;line-height:0;position:relative;top:-0.3px">2</span>B<span style="font-size:18px;letter-spacing:-0.802px;line-height:0;position:relative;top:-0.3px">150000</span></div><div style="position:absolute;left:738px;top:842px;line-height:18px;white-space:pre;font-family:'Liberation Mono',monospace;font-size:16px;letter-spacing:0.4px;color:#000;"><span style="background:#00ffff;color:#000;display:inline-block;height:18px">call</span> <span style="background:#ffff00;color:#000;display:inline-block;height:18px">re<span style="font-size:18px;letter-spacing:-0.802px;line-height:0;position:relative;top:-0.3px">6</span>.<span style="font-size:18px;letter-spacing:-0.802px;line-height:0;position:relative;top:-0.3px">402734</span></span></div><div style="position:absolute;left:353px;top:847px;width:6px;height:6px;border-radius:50%;background:#808080"></div><div style="position:absolute;left:382px;top:860px;line-height:18px;white-space:pre;font-family:'Liberation Mono',monospace;font-size:16px;color:#808080;"><span style="font-size:18px;letter-spacing:-1.182px;line-height:0;position:relative;top:-0.3px">00401209</span></div><div style="position:absolute;left:533px;top:860px;line-height:18px;white-space:pre;font-family:'Liberation Mono',monospace;font-size:16px;letter-spacing:0.4px;color:#000;">A<span style="font-size:18px;letter-spacing:-0.802px;line-height:0;position:relative;top:-0.3px">1</span> B<span style="font-size:18px;letter-spacing:-0.802px;line-height:0;position:relative;top:-0.3px">8</span>A<span style="font-size:18px;letter-spacing:-0.802px;line-height:0;position:relative;top:-0.3px">94000</span></div><div style="position:absolute;left:738px;top:860px;line-height:18px;white-space:pre;font-family:'Liberation Mono',monospace;font-size:16px;letter-spacing:0.4px;color:#000;">mov <span style="color:#008000">eax</span>,<span style="color:#000080">dword ptr</span> <span style="color:#ff00ff">ds</span>:[<span style="background:#ffff00;color:#000;display:inline-block;height:18px"><span style="font-size:18px;letter-spacing:-0.802px;line-height:0;position:relative;top:-0.3px">40</span>A<span style="font-size:18px;letter-spacing:-0.802px;line-height:0;position:relative;top:-0.3px">9</span>B<span style="font-size:18px;letter-spacing:-0.802px;line-height:0;position:relative;top:-0.3px">8</span></span>]</div></div><svg style="position:absolute;left:0;top:0" width="560" height="864">
<rect x="3" y="319" width="32" height="18" rx="1" fill="#4040ff"/>
<line x1="35" y1="328" x2="349" y2="328" stroke="#4040ff" stroke-width="4"/>
<polyline points="340.5,320.5 348.5,328 340.5,335.5" fill="none" stroke="#4040ff" stroke-width="3" stroke-linecap="square"/>
<path d="M349 634 H302 V706 H347" fill="none" stroke="#00b4ff" stroke-width="2" stroke-dasharray="9 3"/>
<polyline points="342,700 348,706 342,712" fill="none" stroke="#00b4ff" stroke-width="2"/>
<polyline points="503.5,632 508,636.5 512.5,632" fill="none" stroke="#ff0000" stroke-width="2.2"/>
</svg><div style="position:absolute;left:5px;top:321px;line-height:18px;white-space:pre;font-family:'Liberation Mono',monospace;font-size:16px;font-size:15px;color:#fff;">EIP</div><div style="position:absolute;left:0px;top:868px;width:1939px;height:83px;background:#fff8f0;border-top:1px solid #7b8189;border-left:1px solid #7b8189;border-bottom:1px solid #7b8189;box-sizing:border-box"></div><div style="position:absolute;left:1px;top:869px;width:1938px;height:1px;background:#ffffff"></div><div style="position:absolute;left:1px;top:869px;width:1px;height:81px;background:#ffffff"></div><div style="position:absolute;left:10px;top:871px;line-height:18px;white-space:pre;font-family:'Liberation Mono',monospace;font-size:16px;color:#000;">dword ptr ss:[ebp-18]=[0019FF5C]=0</div><div style="position:absolute;left:10px;top:889px;line-height:18px;white-space:pre;font-family:'Liberation Mono',monospace;font-size:16px;color:#000;">esp=0019FF48 &quot;疠@&quot;</div><div style="position:absolute;left:10px;top:907px;line-height:18px;white-space:pre;font-family:'Liberation Mono',monospace;font-size:16px;color:#000;"></div><div style="position:absolute;left:10px;top:925px;line-height:18px;white-space:pre;font-family:'Liberation Mono',monospace;font-size:16px;color:#000;">GDPT:00401194 re6.exe:$1194 #0</div><div style="position:absolute;left:0px;top:951px;width:1939px;height:44px;background:#f0f0f0"></div><div style="position:absolute;left:1px;top:955px;width:125px;height:39px;background:#f9f9f9;border-right:1px solid #e3e3e3;border-top:1px solid #e8e8e8;box-sizing:border-box"></div><div style="position:absolute;left:126px;top:958px;width:117px;height:36px;background:#f2f2f2;border-top:1px solid #e6e6e6;border-right:1px solid #e3e3e3;box-sizing:border-box"></div><div style="position:absolute;left:243px;top:958px;width:122px;height:36px;background:#f2f2f2;border-top:1px solid #e6e6e6;border-right:1px solid #e3e3e3;box-sizing:border-box"></div><div style="position:absolute;left:365px;top:958px;width:122px;height:36px;background:#f2f2f2;border-top:1px solid #e6e6e6;border-right:1px solid #e3e3e3;box-sizing:border-box"></div><div style="position:absolute;left:487px;top:958px;width:122px;height:36px;background:#f2f2f2;border-top:1px solid #e6e6e6;border-right:1px solid #e3e3e3;box-sizing:border-box"></div><div style="position:absolute;left:609px;top:958px;width:122px;height:36px;background:#f2f2f2;border-top:1px solid #e6e6e6;border-right:1px solid #e3e3e3;box-sizing:border-box"></div><div style="position:absolute;left:731px;top:958px;width:104px;height:36px;background:#f2f2f2;border-top:1px solid #e6e6e6;border-right:1px solid #e3e3e3;box-sizing:border-box"></div><div style="position:absolute;left:835px;top:958px;width:118px;height:36px;background:#f2f2f2;border-top:1px solid #e6e6e6;border-right:1px solid #e3e3e3;box-sizing:border-box"></div><div style="position:absolute;left:50.5px;top:962px;line-height:24px;white-space:pre;font-family:'Liberation Sans',sans-serif;font-size:18px;color:#000;">转储</div><div style="position:absolute;left:95.5px;top:964px;line-height:22px;white-space:pre;font-family:'Liberation Serif',serif;font-size:17px;color:#000;">1</div><div style="position:absolute;left:172.1px;top:962px;line-height:24px;white-space:pre;font-family:'Liberation Sans',sans-serif;font-size:18px;color:#000;">转储</div><div style="position:absolute;left:216.5px;top:964px;line-height:22px;white-space:pre;font-family:'Liberation Serif',serif;font-size:17px;color:#000;">2</div><div style="position:absolute;left:294.1px;top:962px;line-height:24px;white-space:pre;font-family:'Liberation Sans',sans-serif;font-size:18px;color:#000;">转储</div><div style="position:absolute;left:339.0px;top:964px;line-height:22px;white-space:pre;font-family:'Liberation Serif',serif;font-size:17px;color:#000;">3</div><div style="position:absolute;left:416.1px;top:962px;line-height:24px;white-space:pre;font-family:'Liberation Sans',sans-serif;font-size:18px;color:#000;">转储</div><div style="position:absolute;left:461.0px;top:964px;line-height:22px;white-space:pre;font-family:'Liberation Serif',serif;font-size:17px;color:#000;">4</div><div style="position:absolute;left:538.1px;top:962px;line-height:24px;white-space:pre;font-family:'Liberation Sans',sans-serif;font-size:18px;color:#000;">转储</div><div style="position:absolute;left:582.5px;top:964px;line-height:22px;white-space:pre;font-family:'Liberation Serif',serif;font-size:17px;color:#000;">5</div><div style="position:absolute;left:659.5px;top:962px;line-height:24px;white-space:pre;font-family:'Liberation Sans',sans-serif;font-size:18px;color:#000;">监视</div><div style="position:absolute;left:705.5px;top:964px;line-height:22px;white-space:pre;font-family:'Liberation Serif',serif;font-size:17px;color:#000;">1</div><div style="position:absolute;left:782.0px;top:962px;line-height:24px;white-space:pre;font-family:'Liberation Sans',sans-serif;font-size:18px;color:#000;">局部</div><div style="position:absolute;left:886.5px;top:962px;line-height:24px;white-space:pre;font-family:'Liberation Sans',sans-serif;font-size:18px;color:#000;">结构体</div><svg style="position:absolute;left:0;top:950" width="1000" height="45"><g transform="translate(0,-950)">
<g id="truck">
<rect x="25" y="962" width="17" height="17" fill="#d8d8d8"/>
<rect x="29" y="964" width="3" height="14" fill="#b0b0b0"/><rect x="35" y="964" width="3" height="14" fill="#a8a8a8"/>
<rect x="25" y="970" width="6" height="8" fill="#c8c8e8" opacity="0.6"/><rect x="36" y="969" width="5" height="8" fill="#b8d0c0"/>
<rect x="18" y="966" width="8" height="13" fill="#f0c030"/>
<rect x="18" y="968" width="4" height="5" fill="#4a88c8"/>
<rect x="18" y="978" width="24" height="2" fill="#808080"/>
<rect x="19" y="979" width="6" height="4" fill="#4a3a3a"/><rect x="34" y="979" width="7" height="4" fill="#4a3a3a"/>
</g>
<use href="#truck" x="122"/>
<use href="#truck" x="244"/>
<use href="#truck" x="366"/>
<use href="#truck" x="488"/>
<!-- watch (cat) -->
<rect x="628" y="965" width="22" height="19" rx="5" fill="#d9a358"/>
<rect x="630" y="962" width="6" height="6" fill="#d8a868"/><rect x="642" y="962" width="6" height="6" fill="#d8a868"/>
<rect x="636" y="966" width="6" height="3" fill="#b06a40"/>
<rect x="632" y="967" width="3" height="4" fill="#f0d090"/><rect x="643" y="967" width="3" height="4" fill="#f0d090"/>
<rect x="634" y="974" width="2" height="2" fill="#c8c8d0"/><rect x="642" y="974" width="2" height="2" fill="#c8c8d0"/>
<rect x="631" y="978" width="6" height="3" fill="#f4dcb0"/><rect x="641" y="978" width="6" height="3" fill="#f4dcb0"/>
<rect x="638" y="978" width="3" height="4" fill="#6a5040"/>
<!-- locals -->
<rect x="749" y="968" width="2" height="15" fill="#505050"/><rect x="772" y="968" width="2" height="15" fill="#505050"/>
<text x="753" y="980" font-family="Liberation Sans" font-size="11" fill="#b04848">x</text>
<rect x="761" y="973" width="9" height="4" fill="#a0a0a0"/>
<!-- struct (candy cane) -->
<path d="M859 984 L870 968 Q873 962 868 961 Q864 961 864 965" fill="none" stroke="#e88080" stroke-width="4" stroke-linecap="round"/>
<path d="M859 984 L870 968 Q873 962 868 961 Q864 961 864 965" fill="none" stroke="#ffffff" stroke-width="4" stroke-dasharray="2 3" opacity="0.7"/>
</g>
</svg><div style="position:absolute;left:0px;top:994px;width:1547px;height:1px;background:#7b8189"></div><div style="position:absolute;left:0px;top:995px;width:1547px;height:23px;background:#f0f0f0"></div><div style="position:absolute;left:0px;top:995px;width:1px;height:23px;background:#7b8189"></div><div style="position:absolute;left:1546px;top:995px;width:1px;height:23px;background:#7b8189"></div><div style="position:absolute;left:1px;top:995px;width:1546px;height:1px;background:#fff"></div><div style="position:absolute;left:1px;top:995px;width:1px;height:23px;background:#fff"></div><div style="position:absolute;left:2px;top:996px;width:1515px;height:20px;background:#c0c0c0"></div><div style="position:absolute;left:2px;top:1016px;width:1515px;height:2px;background:#808080"></div><div style="position:absolute;left:94px;top:996px;width:4px;height:22px;background:#808080"></div><div style="position:absolute;left:580px;top:996px;width:4px;height:22px;background:#808080"></div><div style="position:absolute;left:756px;top:996px;width:4px;height:22px;background:#808080"></div><div style="position:absolute;left:1516px;top:996px;width:4px;height:22px;background:#808080"></div><div style="position:absolute;left:10px;top:996.5px;line-height:22px;white-space:pre;font-family:'Liberation Sans',sans-serif;font-size:16px;color:#000;">地址</div><div style="position:absolute;left:106px;top:996.5px;line-height:22px;white-space:pre;font-family:'Liberation Sans',sans-serif;font-size:16px;color:#000;">十六进制</div><div style="position:absolute;left:591px;top:998.5px;line-height:22px;white-space:pre;font-family:'Liberation Mono',monospace;font-size:16px;font-size:16px;color:#000;">ASCII</div><div style="position:absolute;left:1547px;top:951px;width:3px;height:67px;background:#f0f0f0"></div><div style="position:absolute;left:1550px;top:954px;width:389px;height:64px;background:#fff8f0"></div><div style="position:absolute;left:1550px;top:954px;width:1px;height:64px;background:#7b8189"></div><div style="position:absolute;left:1550px;top:954px;width:389px;height:1px;background:#7b8189"></div><div style="position:absolute;left:1551px;top:955px;width:388px;height:1px;background:#fff"></div><div style="position:absolute;left:1551px;top:955px;width:1px;height:63px;background:#fff"></div><div style="position:absolute;left:1552px;top:956px;width:94px;height:18px;background:#000"></div><div style="position:absolute;left:1645px;top:956px;width:2px;height:62px;background:#808080"></div><div style="position:absolute;left:1745px;top:956px;width:2px;height:62px;background:#808080"></div><div style="position:absolute;left:1560px;top:956px;line-height:18px;white-space:pre;font-family:'Liberation Mono',monospace;font-size:16px;color:#fff;"><span style="font-size:18px;letter-spacing:-1.182px;line-height:0;position:relative;top:-0.3px">0019</span>FF<span style="font-size:18px;letter-spacing:-1.182px;line-height:0;position:relative;top:-0.3px">48</span></div><div style="position:absolute;left:1656px;top:956px;line-height:18px;white-space:pre;font-family:'Liberation Mono',monospace;font-size:16px;color:#000;"><span style="font-size:18px;letter-spacing:-1.182px;line-height:0;position:relative;top:-0.3px">0040</span>DFF<span style="font-size:18px;letter-spacing:-1.182px;line-height:0;position:relative;top:-0.3px">0</span></div><div style="position:absolute;left:1755px;top:956px;line-height:18px;white-space:pre;font-family:'Liberation Mono',monospace;font-size:16px;color:#000;">re<span style="font-size:18px;letter-spacing:-1.182px;line-height:0;position:relative;top:-0.3px">6</span>.EntryPoint</div><div style="position:absolute;left:1560px;top:974px;line-height:18px;white-space:pre;font-family:'Liberation Mono',monospace;font-size:16px;color:#ff0000;"><span style="font-size:18px;letter-spacing:-1.182px;line-height:0;position:relative;top:-0.3px">0019</span>FF<span style="font-size:18px;letter-spacing:-1.182px;line-height:0;position:relative;top:-0.3px">4</span>C</div><div style="position:absolute;left:1656px;top:974px;line-height:18px;white-space:pre;font-family:'Liberation Mono',monospace;font-size:16px;color:#000;"><span style="font-size:18px;letter-spacing:-1.182px;line-height:0;position:relative;top:-0.3px">0040</span>DFF<span style="font-size:18px;letter-spacing:-1.182px;line-height:0;position:relative;top:-0.3px">0</span></div><div style="position:absolute;left:1755px;top:974px;line-height:18px;white-space:pre;font-family:'Liberation Mono',monospace;font-size:16px;color:#000;">re<span style="font-size:18px;letter-spacing:-1.182px;line-height:0;position:relative;top:-0.3px">6</span>.EntryPoint</div><div style="position:absolute;left:1560px;top:992px;line-height:18px;white-space:pre;font-family:'Liberation Mono',monospace;font-size:16px;color:#808080;"><span style="font-size:18px;letter-spacing:-1.182px;line-height:0;position:relative;top:-0.3px">0019</span>FF<span style="font-size:18px;letter-spacing:-1.182px;line-height:0;position:relative;top:-0.3px">50</span></div><div style="position:absolute;left:1656px;top:992px;line-height:18px;white-space:pre;font-family:'Liberation Mono',monospace;font-size:16px;color:#000;"><span style="font-size:18px;letter-spacing:-1.182px;line-height:0;position:relative;top:-0.3px">003</span>A<span style="font-size:18px;letter-spacing:-1.182px;line-height:0;position:relative;top:-0.3px">8000</span></div><div style="position:absolute;left:1560px;top:1010px;line-height:18px;white-space:pre;font-family:'Liberation Mono',monospace;font-size:16px;color:#808080;"><span style="font-size:18px;letter-spacing:-1.182px;line-height:0;position:relative;top:-0.3px">0019</span>FF<span style="font-size:18px;letter-spacing:-1.182px;line-height:0;position:relative;top:-0.3px">54</span></div><div style="position:absolute;left:1656px;top:1010px;line-height:18px;white-space:pre;font-family:'Liberation Mono',monospace;font-size:16px;color:#000;"><span style="font-size:18px;letter-spacing:-1.182px;line-height:0;position:relative;top:-0.3px">00000000</span></div><svg style="position:absolute;left:0;top:0" width="1939" height="1018">
<rect x="540.5" y="18.5" width="57" height="49" fill="none" stroke="#ec1c24" stroke-width="3"/>
<line x1="746.5" y1="178.5" x2="610" y2="83" stroke="#ec1c24" stroke-width="7.2" stroke-linecap="round"/>
<polygon points="598,73 614,99 627,79" fill="#ec1c24"/>
</svg>
</body></html>
